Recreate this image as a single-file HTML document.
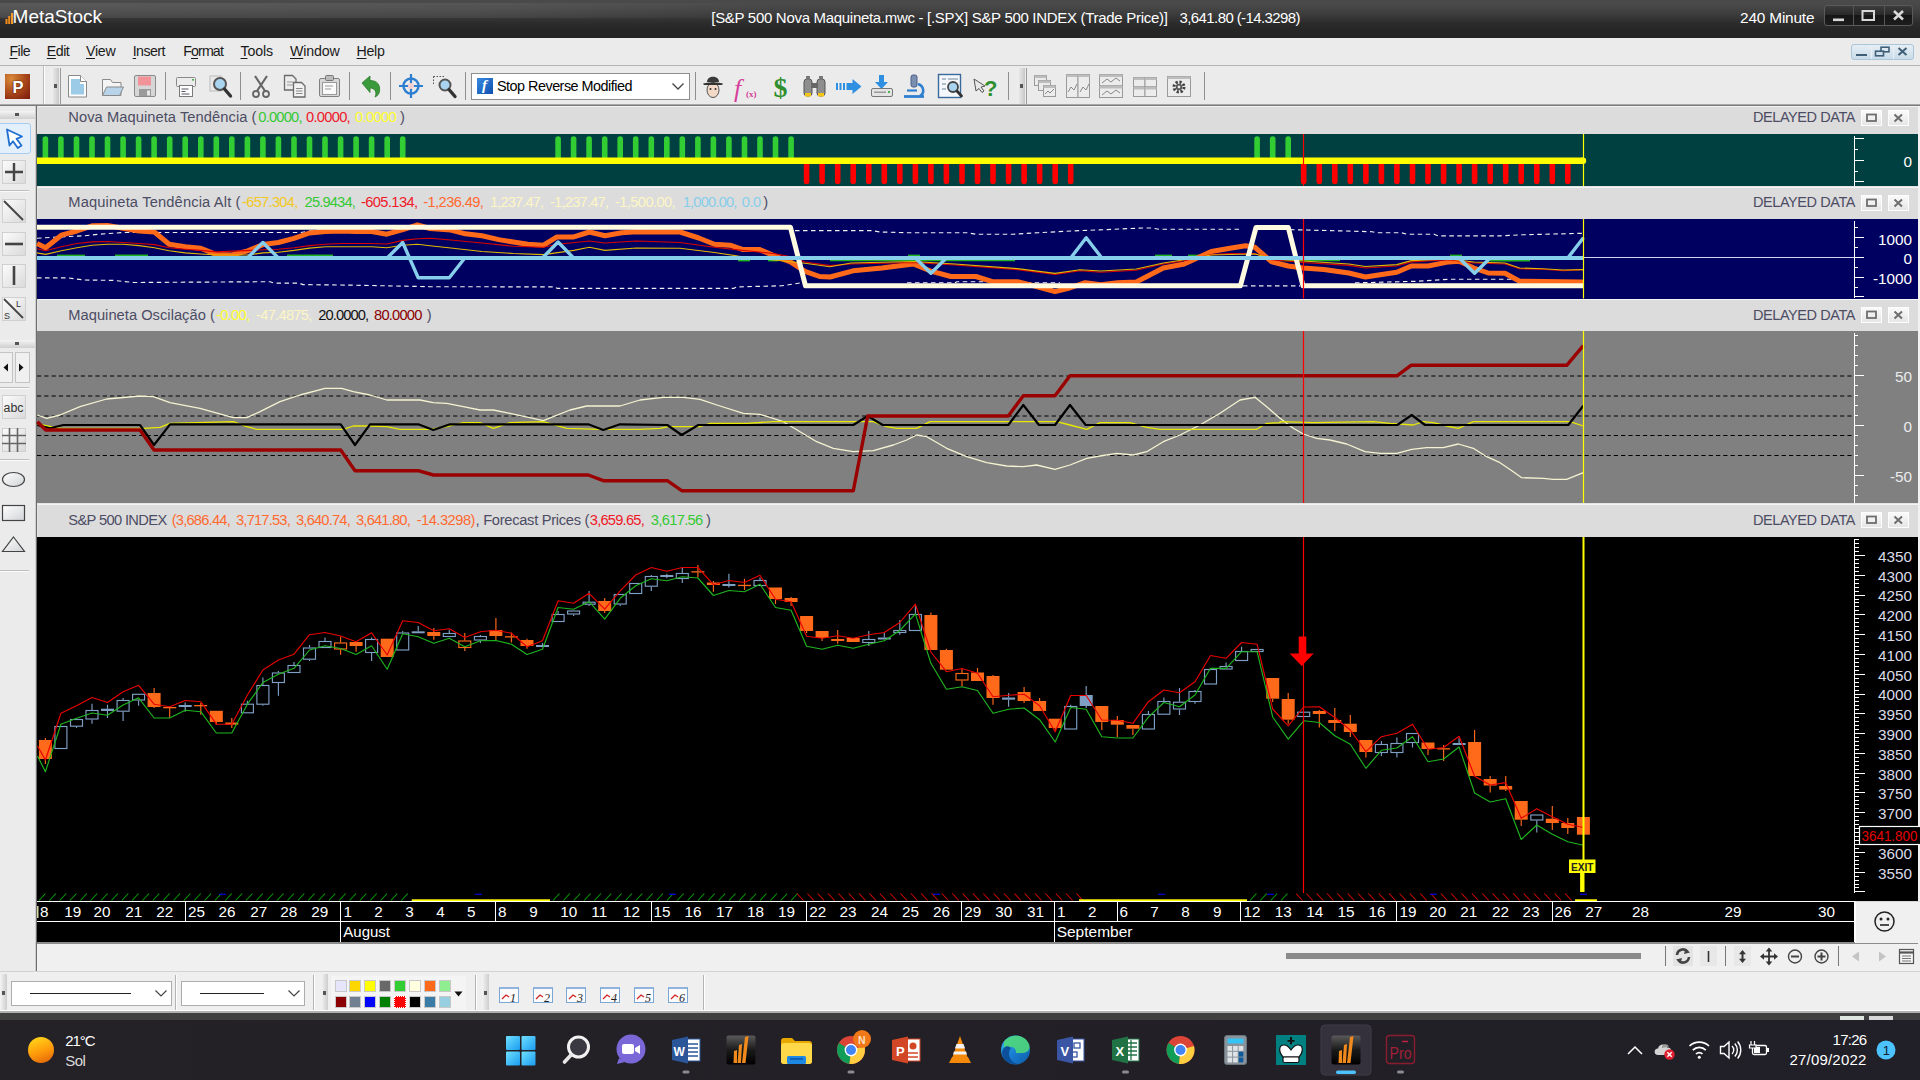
<!DOCTYPE html>
<html lang="en"><head><meta charset="utf-8"><title>MetaStock</title>
<style>
html,body{margin:0;padding:0;}
body{width:1920px;height:1080px;overflow:hidden;position:relative;background:#f0f0f0;font-family:"Liberation Sans",sans-serif;font-size:14px;color:#000;}
.a{position:absolute;}
.t{position:absolute;white-space:nowrap;line-height:1;}
#titlebar{left:0;top:0;width:1920px;height:38px;background:linear-gradient(90deg,rgba(255,255,255,0.09) 0,rgba(255,255,255,0.07) 25%,rgba(255,255,255,0) 42%) 0 3px/1920px 15px no-repeat,linear-gradient(180deg,#4a4a4a 0px,#494949 4px,#444 9px,#393939 16px,#2c2c2c 23px,#262626 30px,#242424 38px);}
#menubar{left:0;top:38px;width:1920px;height:27px;background:#ebebeb;}
#toolbar{left:0;top:65px;width:1920px;height:40px;background:#ebebeb;border-top:1px solid #b4b4b4;box-sizing:border-box;}
.menu{top:47px;font-size:14.6px;color:#1a1a1a;letter-spacing:-0.45px;}
.menu u{text-decoration:underline;text-underline-offset:2px;}
.vsep{position:absolute;width:1px;background:#8f8f8f;top:72px;height:28px;}
.hdr{position:absolute;left:38px;width:1880px;background:#dcdcdc;border-top:1px solid #f4f4f4;box-sizing:border-box;}
.hdr .t{top:5px;font-size:14.6px;color:#48485e;letter-spacing:-0.32px;}
.hbtn{position:absolute;top:3px;width:21px;height:16px;background:linear-gradient(#fafafa,#e6e6e6);border:1px solid #fdfdfd;box-sizing:border-box;}
.lbtn{position:absolute;left:2px;width:24px;height:24px;background:linear-gradient(135deg,#fbfbfb,#dadada);border:1px solid #d0d0d0;box-sizing:border-box;}
</style></head><body>
<div id="titlebar" class="a"></div><svg class="a" style="left:5px;top:12px" width="9" height="12" viewBox="0 0 9 12"><rect x="0.5" y="7" width="2" height="5" fill="#f08a1c"/><rect x="3.2" y="4" width="2" height="8" fill="#f08a1c"/><rect x="6" y="1" width="2.2" height="11" fill="#f59b2a"/></svg><div class="t" style="left:12.6px;top:7.1px;font-size:19px;letter-spacing:-0.040px;color:#fff;">MetaStock</div><div class="t" style="left:711.3px;top:9.8px;font-size:15px;letter-spacing:-0.301px;color:#fff;">[S&amp;P 500 Nova Maquineta.mwc - [.SPX] S&amp;P 500 INDEX (Trade Price)]</div><div class="t" style="left:1179.5px;top:9.8px;font-size:15px;letter-spacing:-0.593px;color:#fff;">3,641.80 (-14.3298)</div><div class="t" style="left:1740.0px;top:9.6px;font-size:15.4px;letter-spacing:-0.180px;color:#fff;">240 Minute</div><div class="a" style="left:1824px;top:5px;width:89px;height:21px;border-radius:3px;background:linear-gradient(#3c3c3c,#2a2a2a 45%,#161616 50%,#1d1d1d);border:1px solid #5a5a5a;box-sizing:border-box;"></div><div class="a" style="left:1853px;top:6px;width:1px;height:19px;background:#555"></div><div class="a" style="left:1884px;top:6px;width:1px;height:19px;background:#555"></div><svg class="a" style="left:1824px;top:5px" width="89" height="21" viewBox="0 0 89 21"><rect x="9" y="13.5" width="11" height="2.6" fill="#d8d8d8"/><rect x="38.5" y="6" width="11.5" height="9" fill="none" stroke="#d8d8d8" stroke-width="2"/><path d="M70 6 L79 14.5 M79 6 L70 14.5" stroke="#d8d8d8" stroke-width="2.6"/></svg><div id="menubar" class="a"></div><div class="t" style="left:9.5px;top:43.7px;font-size:14.2px;letter-spacing:-0.595px;color:#1a1a1a;text-underline-offset:2px;"><u>F</u>ile</div><div class="t" style="left:46.8px;top:43.7px;font-size:14.2px;letter-spacing:-0.492px;color:#1a1a1a;text-underline-offset:2px;"><u>E</u>dit</div><div class="t" style="left:86.0px;top:43.7px;font-size:14.2px;letter-spacing:-0.256px;color:#1a1a1a;text-underline-offset:2px;"><u>V</u>iew</div><div class="t" style="left:132.7px;top:43.7px;font-size:14.2px;letter-spacing:-0.536px;color:#1a1a1a;text-underline-offset:2px;"><u>I</u>nsert</div><div class="t" style="left:183.2px;top:43.7px;font-size:14.2px;letter-spacing:-0.862px;color:#1a1a1a;text-underline-offset:2px;">F<u>o</u>rmat</div><div class="t" style="left:240.5px;top:43.7px;font-size:14.2px;letter-spacing:-0.130px;color:#1a1a1a;text-underline-offset:2px;"><u>T</u>ools</div><div class="t" style="left:290.0px;top:43.7px;font-size:14.2px;letter-spacing:-0.168px;color:#1a1a1a;text-underline-offset:2px;"><u>W</u>indow</div><div class="t" style="left:356.6px;top:43.7px;font-size:14.2px;letter-spacing:-0.326px;color:#1a1a1a;text-underline-offset:2px;"><u>H</u>elp</div><div class="a" style="left:1851px;top:44px;width:63px;height:16px;border-radius:3px;background:linear-gradient(#e6eef5,#c9dbe8);border:1px solid #a9c6da;box-sizing:border-box;"></div><svg class="a" style="left:1851px;top:44px" width="63" height="16" viewBox="0 0 63 16"><rect x="5" y="10" width="11" height="2" fill="#3f5f78"/><rect x="30" y="3.2" width="8" height="4.6" fill="none" stroke="#3f5f78" stroke-width="1.6"/><rect x="24.5" y="7.2" width="8" height="4.6" fill="#cfe0ec" stroke="#3f5f78" stroke-width="1.6"/><path d="M47.5 4 L55.5 11 M55.5 4 L47.5 11" stroke="#3f5f78" stroke-width="2"/><path d="M20.5 1V15M42.5 1V15" stroke="#e8f0f6" stroke-width="1"/></svg><div id="toolbar" class="a"></div><div class="a" style="left:0;top:104px;width:1920px;height:1px;background:#a8a8a8"></div><div class="a" style="left:0;top:105px;width:1920px;height:1px;background:#7a7a7a"></div><div class="a" style="left:5px;top:74px;width:25px;height:25px;background:radial-gradient(circle at 25% 20%,#d98a3a,#b0501c 45%,#8c2a12 80%,#7a1c0c);"></div><div class="t" style="left:12.500px;top:79px;font-size:16.500px;font-weight:bold;color:#fff;text-shadow:0 0 2px #300">P</div><div class="a" style="left:43px;top:66px;width:1px;height:38px;background:#bdbdbd"></div><div class="a" style="left:44px;top:66px;width:1px;height:38px;background:#fff"></div><div class="a" style="left:51px;top:68px;width:8px;height:36px;background:linear-gradient(90deg,#f2f2f2,#c8c8c8)"></div><div class="a" style="left:54px;top:84px;width:3px;height:4px;background:#555"></div><div class="a" style="left:60px;top:68px;width:1px;height:36px;background:#9a9a9a"></div><div class="a" style="left:1017px;top:68px;width:8px;height:36px;background:linear-gradient(90deg,#f2f2f2,#c8c8c8)"></div><div class="a" style="left:1020px;top:84px;width:3px;height:4px;background:#555"></div><div class="a" style="left:1026px;top:68px;width:1px;height:36px;background:#9a9a9a"></div><div class="vsep" style="left:165px"></div><div class="vsep" style="left:240px"></div><div class="vsep" style="left:349px"></div><div class="vsep" style="left:390px"></div><div class="vsep" style="left:465px"></div><div class="vsep" style="left:695px"></div><div class="vsep" style="left:1008px"></div><div class="vsep" style="left:1204px"></div><svg class="a" style="left:0;top:0" width="1920" height="110" viewBox="0 0 1920 110"><path d="M68.5 75.5h12l6 6v15.5h-18z" fill="#fdfdfd" stroke="#8a8a8a"/><path d="M71 79h9v5h4v10.5h-13z" fill="#9ccbe8"/><path d="M80.5 75.5v6h6" fill="#fff" stroke="#8a8a8a"/><path d="M102.5 95.5v-16h8l2 3h8.5v13z" fill="#f4f4f4" stroke="#8a8a8a"/><path d="M102.5 95.5l4-8.5h17l-4 8.5z" fill="#b8d4ea" stroke="#8a8a8a"/><rect x="134.5" y="75.5" width="21" height="21" rx="1.5" fill="#d6d6d6" stroke="#8a8a8a"/><rect x="138" y="76.5" width="13" height="9" fill="#f2939a"/><rect x="139" y="89" width="12" height="7" fill="#9a9a9a"/><rect x="147" y="90.5" width="3" height="5" fill="#e6e6e6"/><rect x="176.5" y="77.5" width="19" height="9" rx="1" fill="#ececec" stroke="#8a8a8a"/><rect x="179.5" y="85.5" width="13" height="11" fill="#fff" stroke="#7a7a7a"/><path d="M181.5 89h7M181.5 91.5h4M181.5 94h8" stroke="#556" stroke-width="1"/><rect x="192" y="79" width="2" height="1.6" fill="#4caf50"/><rect x="210" y="76" width="11" height="15" fill="#e8e8e8" stroke="#bbb"/><circle cx="220" cy="84" r="6" fill="#a8d4f0" stroke="#555" stroke-width="2"/><path d="M224.5 89l6 7" stroke="#333" stroke-width="3.4" stroke-linecap="round"/><path d="M255 76l10 15M267 76l-10 15" stroke="#666" stroke-width="2.2" fill="none"/><circle cx="256" cy="94" r="3" fill="none" stroke="#666" stroke-width="1.8"/><circle cx="266" cy="94" r="3" fill="none" stroke="#666" stroke-width="1.8"/><path d="M284.5 75.500h8l3.500 3.500v11h-11.500z" fill="#ececec" stroke="#6a6a6a" stroke-width="1.300"/><path d="M287 82h6M287 85h6" stroke="#999"/><path d="M293.5 82.500h8l3.500 3.500v11h-11.500z" fill="#f2f2f2" stroke="#6a6a6a" stroke-width="1.300"/><path d="M296 88.500h6.500M296 91h6.500M296 93.500h6.500" stroke="#888"/><rect x="319.500" y="78.500" width="20" height="18" rx="1.500" fill="#d8d8d8" stroke="#808080"/><rect x="322.500" y="82.500" width="14" height="12" fill="#fafafa" stroke="#999"/><rect x="325.500" y="75.500" width="8" height="5" rx="1" fill="#bbb" stroke="#777"/><path d="M325 86h8M325 89h6" stroke="#999"/><path d="M362 83l8-7v4.500c7 0 10.500 4 9.500 11c-0.500 2.500-2 4.500-4.500 5.500c2.500-5-0.500-9-5-9v4.500z" fill="#3b9a3b" stroke="#2c7a2c" stroke-width="0.800"/><circle cx="411" cy="86" r="7.500" fill="none" stroke="#2f7fd0" stroke-width="2.400"/><path d="M411 74v24M399 86h24" stroke="#2f7fd0" stroke-width="2.200"/><circle cx="411" cy="86" r="3" fill="#f6d0d0"/><path d="M433.500 76.500h11M433.500 76.500v9" stroke="#555" stroke-dasharray="1.500 1.500" fill="none"/><circle cx="445" cy="85" r="5.500" fill="#a8d4f0" stroke="#555" stroke-width="2"/><path d="M449 89.500l6 7" stroke="#333" stroke-width="3.400" stroke-linecap="round"/><ellipse cx="713" cy="90" rx="6" ry="7.500" fill="#f3d9c8" stroke="#555"/><path d="M703 83.500c3-1.500 17-1.500 20 0l-1 1.500h-18z" fill="#333"/><path d="M707 82c0-7 12-7 12 0z" fill="#3a3a3a"/><circle cx="710.500" cy="89" r="1" fill="#333"/><circle cx="715.500" cy="89" r="1" fill="#333"/><text x="734" y="97" font-family="Liberation Serif,serif" font-style="italic" font-size="26" fill="#d6409a">f</text><text x="746" y="97" font-family="Liberation Serif,serif" font-size="9" font-weight="bold" fill="#d6409a">(x)</text><text x="773.500" y="96.500" font-family="Liberation Serif,serif" font-size="28" font-weight="bold" fill="#2f8f2f">$</text><rect x="804" y="79" width="8" height="17" rx="3" fill="#8e8e8e" stroke="#555"/><rect x="817" y="79" width="8" height="17" rx="3" fill="#8e8e8e" stroke="#555"/><rect x="811" y="83" width="7" height="5" fill="#666"/><rect x="805" y="93" width="6" height="3.500" fill="#f5c518"/><rect x="818" y="93" width="6" height="3.500" fill="#f5c518"/><rect x="806" y="76" width="4" height="4" fill="#777"/><rect x="819" y="76" width="4" height="4" fill="#777"/><path d="M836 83h2v7h-2zM839.500 83h2v7h-2zM843 83h2v7h-2zM846.500 83h6v-4l9 7.500l-9 7.500v-4h-6z" fill="#2f8fe0"/><path d="M879 75h5v7h4l-6.500 7l-6.500-7h4z" fill="#2f8fe0"/><rect x="871.500" y="88.500" width="21" height="8" rx="1.500" fill="#e4e4e4" stroke="#777"/><rect x="874" y="91.500" width="12" height="1.500" fill="#999"/><rect x="888" y="91" width="2" height="2" fill="#4caf50"/><rect x="911" y="75" width="6" height="12" rx="2" fill="#7d8fb0" stroke="#4a5f8a"/><path d="M918 84c6 2 7 9 2 12" fill="none" stroke="#2f7fd0" stroke-width="2.600"/><path d="M904 96.500h20" stroke="#2f7fd0" stroke-width="2.800"/><path d="M907 90.500h10" stroke="#2f7fd0" stroke-width="2.200"/><rect x="938.500" y="74.500" width="22" height="23" fill="#f4f8fc" stroke="#3a6a9a" stroke-width="1.400"/><path d="M942 79h4M948 79h10M942 84h4M942 89h4" stroke="#9ab" stroke-width="1.500"/><circle cx="953" cy="87" r="5" fill="#a8d4f0" stroke="#444" stroke-width="1.800"/><path d="M957 91l4.500 5" stroke="#333" stroke-width="2.800" stroke-linecap="round"/><path d="M974 79l2 12l3-2.500l3 4l2-1.500l-3-4l4-1z" fill="#e8e8e8" stroke="#555"/><text x="984" y="96" font-family="Liberation Sans,sans-serif" font-size="22" font-weight="bold" fill="#2f8f2f">?</text><rect x="1034.5" y="75.5" width="12" height="10" fill="#ececec" stroke="#9a9a9a"/><rect x="1034.5" y="75.5" width="12" height="2.500" fill="#bdbdbd"/><rect x="1038.5" y="80.5" width="12" height="10" fill="#ececec" stroke="#9a9a9a"/><rect x="1038.5" y="80.5" width="12" height="2.500" fill="#bdbdbd"/><rect x="1043.5" y="85.5" width="12" height="11" fill="#ececec" stroke="#9a9a9a"/><rect x="1043.5" y="85.5" width="12" height="2.500" fill="#bdbdbd"/><path d="M1045 94l3-3l2 2l4-4" stroke="#888" fill="none"/><rect x="1066.5" y="74.5" width="11.5" height="23" fill="#ececec" stroke="#9a9a9a"/><rect x="1066.5" y="74.5" width="11.5" height="2.500" fill="#bdbdbd"/><rect x="1078" y="74.5" width="11.5" height="23" fill="#ececec" stroke="#9a9a9a"/><rect x="1078" y="74.5" width="11.5" height="2.500" fill="#bdbdbd"/><path d="M1068 92l3-5l3 3l3-6M1080 92l3-5l3 3l3-6" stroke="#888" fill="none"/><rect x="1099.5" y="74.5" width="23" height="11.5" fill="#ececec" stroke="#9a9a9a"/><rect x="1099.5" y="74.5" width="23" height="2.500" fill="#bdbdbd"/><rect x="1099.5" y="86" width="23" height="11.5" fill="#ececec" stroke="#9a9a9a"/><rect x="1099.5" y="86" width="23" height="2.500" fill="#bdbdbd"/><path d="M1102 83l5-4l4 3l5-4l4 3M1102 95l5-4l4 3l5-4l4 3" stroke="#888" fill="none"/><rect x="1133.5" y="77.5" width="11.5" height="9.5" fill="#ececec" stroke="#9a9a9a"/><rect x="1133.5" y="77.5" width="11.5" height="2.500" fill="#bdbdbd"/><rect x="1145" y="77.5" width="11.5" height="9.5" fill="#ececec" stroke="#9a9a9a"/><rect x="1145" y="77.5" width="11.5" height="2.500" fill="#bdbdbd"/><rect x="1133.5" y="87" width="11.5" height="9.5" fill="#ececec" stroke="#9a9a9a"/><rect x="1133.5" y="87" width="11.5" height="2.500" fill="#bdbdbd"/><rect x="1145" y="87" width="11.5" height="9.5" fill="#ececec" stroke="#9a9a9a"/><rect x="1145" y="87" width="11.5" height="2.500" fill="#bdbdbd"/><rect x="1167.5" y="76.5" width="23" height="20" fill="#ececec" stroke="#9a9a9a"/><rect x="1167.5" y="76.5" width="23" height="2.500" fill="#bdbdbd"/><circle cx="1179" cy="87" r="5" fill="none" stroke="#444" stroke-width="3" stroke-dasharray="2.2 1.700"/><circle cx="1179" cy="87" r="3.200" fill="#555"/><circle cx="1179" cy="87" r="1.400" fill="#ececec"/></svg><div class="a" style="left:471px;top:73px;width:219px;height:27px;background:#fff;border:1px solid #8e8e8e;box-sizing:border-box;"></div><div class="a" style="left:477px;top:78px;width:16px;height:16px;background:linear-gradient(135deg,#3a8ae0,#0d4fb0);"></div><div class="t" style="left:482px;top:78px;font-family:'Liberation Serif',serif;font-style:italic;font-weight:bold;font-size:15px;color:#fff">f</div><div class="t" style="left:497.0px;top:78.8px;font-size:14.4px;letter-spacing:-0.508px;color:#000;">Stop Reverse Modified</div><svg class="a" style="left:670px;top:80px" width="16" height="12" viewBox="0 0 16 12"><path d="M2.500 3.500L8 9L13.500 3.500" fill="none" stroke="#444" stroke-width="1.300"/></svg><div class="a" style="left:0;top:106px;width:36px;height:865px;background:#ebebeb"></div><div class="a" style="left:35px;top:106px;width:1px;height:865px;background:#cfcfcf"></div><div class="a" style="left:36px;top:106px;width:1px;height:865px;background:#6e6e6e"></div><div class="a" style="left:0;top:111px;width:35px;height:8px;background:linear-gradient(#f4f4f4,#cfcfcf)"></div><div class="a" style="left:15px;top:113px;width:4px;height:3px;background:#555"></div><div class="a" style="left:0;top:340px;width:35px;height:8px;background:linear-gradient(#f4f4f4,#cfcfcf)"></div><div class="a" style="left:15px;top:342px;width:4px;height:3px;background:#555"></div><div class="a" style="left:-2px;top:123px;width:33px;height:31px;background:#e3effa;border:1px solid #a6cdf2;border-radius:3px;box-sizing:border-box"></div><svg class="a" style="left:4px;top:127px" width="24" height="24" viewBox="0 0 24 24"><path d="M3 2.500L18 9.500L12.500 11.800L17.500 18.500L13.800 21L9 14.200L5.500 18.500z" fill="#fff" stroke="#1f6fd0" stroke-width="1.800" stroke-linejoin="round"/></svg><div class="lbtn" style="top:159.5px"></div><svg class="a" style="left:1px;top:158.5px" width="26" height="26" viewBox="0 0 26 26"><path d="M13 4v18M4 13h18" stroke="#444" stroke-width="2.400"/></svg><div class="lbtn" style="top:199px"></div><svg class="a" style="left:1px;top:198px" width="26" height="26" viewBox="0 0 26 26"><path d="M3 3L22 22" stroke="#444" stroke-width="2"/></svg><div class="lbtn" style="top:231.5px"></div><svg class="a" style="left:1px;top:230.5px" width="26" height="26" viewBox="0 0 26 26"><path d="M4 13h18" stroke="#444" stroke-width="2.600"/></svg><div class="lbtn" style="top:264px"></div><svg class="a" style="left:1px;top:263px" width="26" height="26" viewBox="0 0 26 26"><path d="M13 3v19" stroke="#444" stroke-width="2.600"/></svg><div class="lbtn" style="top:296.5px"></div><svg class="a" style="left:1px;top:295.5px" width="26" height="26" viewBox="0 0 26 26"><path d="M3 3L22 22" stroke="#444" stroke-width="1.800"/><text x="15" y="11" font-size="9" font-family="Liberation Sans,sans-serif" fill="#333">L</text><text x="3" y="23" font-size="9" font-family="Liberation Sans,sans-serif" fill="#333">S</text></svg><div class="lbtn" style="top:395px"></div><svg class="a" style="left:1px;top:394px" width="26" height="26" viewBox="0 0 26 26"><text x="2.500" y="17.500" font-size="12.500" font-family="Liberation Sans,sans-serif" fill="#333" textLength="20" lengthAdjust="spacingAndGlyphs">abc</text></svg><div class="lbtn" style="top:428px"></div><svg class="a" style="left:1px;top:427px" width="26" height="26" viewBox="0 0 26 26"><path d="M8.500 1v24M16.500 1v24M1 8.500h24M1 16.500h24" stroke="#666" stroke-width="1.600"/></svg><div class="a" style="left:0;top:190px;width:29px;height:1px;background:#bdbdbd"></div><div class="a" style="left:0;top:191px;width:29px;height:1px;background:#fafafa"></div><div class="a" style="left:0;top:386.5px;width:29px;height:1px;background:#bdbdbd"></div><div class="a" style="left:0;top:387.5px;width:29px;height:1px;background:#fafafa"></div><div class="a" style="left:0;top:459px;width:29px;height:1px;background:#bdbdbd"></div><div class="a" style="left:0;top:460px;width:29px;height:1px;background:#fafafa"></div><div class="a" style="left:0;top:570px;width:29px;height:1px;background:#bdbdbd"></div><div class="a" style="left:0;top:571px;width:29px;height:1px;background:#fafafa"></div><div class="a" style="left:-1px;top:352px;width:14px;height:31px;border:1px solid #c4c4c4;box-sizing:border-box;background:#f0f0f0"></div><div class="a" style="left:15px;top:352px;width:15px;height:31px;border:1px solid #c4c4c4;box-sizing:border-box;background:#f0f0f0"></div><svg class="a" style="left:0;top:352px" width="30" height="31" viewBox="0 0 30 31"><path d="M8 11.500v8l-4.500-4zM19 11.500v8l4.500-4z" fill="#111"/></svg><svg class="a" style="left:0;top:465px" width="30" height="95" viewBox="0 0 30 95"><defs><linearGradient id="sg" x1="0" y1="0" x2="1" y2="1"><stop offset="0" stop-color="#fff"/><stop offset="1" stop-color="#d0d4d6"/></linearGradient></defs><ellipse cx="13.500" cy="14.500" rx="11" ry="7" fill="url(#sg)" stroke="#444" stroke-width="1.200"/><rect x="2.500" y="40.500" width="22" height="15" fill="url(#sg)" stroke="#444" stroke-width="1.200"/><path d="M13.500 72L24.500 86.500H2.500z" fill="url(#sg)" stroke="#444" stroke-width="1.200"/></svg><div class="a" style="left:37px;top:942px;width:1883px;height:2px;background:#8c8c8c"></div><div class="a" style="left:37px;top:944px;width:1883px;height:27px;background:#f0f0f0"></div><div class="a" style="left:1286px;top:953px;width:355px;height:6px;background:#8a8a8a"></div><div class="a" style="left:1665px;top:946px;width:1px;height:20px;background:#777"></div><div class="a" style="left:1725px;top:946px;width:1px;height:20px;background:#777"></div><div class="a" style="left:1838px;top:946px;width:1px;height:20px;background:#777"></div><svg class="a" style="left:1660px;top:944px" width="260" height="26" viewBox="1660 944 260 26">
<rect x="1673" y="946" width="20" height="20" fill="#e4e4e4"/><path d="M1677 955a6 6 0 0 1 10.500-3.500M1689 957a6 6 0 0 1-10.500 3.500" fill="none" stroke="#444" stroke-width="2.600"/><path d="M1685.500 948.500l4.500 4l-6 1.500zM1680.500 963.500l-4.500-4l6-1.500z" fill="#444"/>
<rect x="1700" y="946" width="17" height="20" fill="#e8e8e8"/><path d="M1708.500 951v11" stroke="#333" stroke-width="1.600"/>
<rect x="1734" y="946" width="17" height="20" fill="#e8e8e8"/><path d="M1742.500 952v9" stroke="#333" stroke-width="2"/><path d="M1742.500 950l3.500 4.200h-7zM1742.500 963l3.500-4.200h-7z" fill="#333"/>
<path d="M1769 950v13M1762 956.500h14" stroke="#333" stroke-width="1.800"/><path d="M1769 947.500l3.300 4h-6.600zM1769 965.500l3.300-4h-6.600zM1760 956.500l4-3.300v6.600zM1778 956.500l-4-3.300v6.600z" fill="#333"/>
<circle cx="1795" cy="956.500" r="6.500" fill="none" stroke="#444" stroke-width="1.400"/><path d="M1791 956.500h8" stroke="#444" stroke-width="2"/>
<circle cx="1821.500" cy="956.500" r="6.500" fill="none" stroke="#444" stroke-width="1.400"/><path d="M1817.500 956.500h8M1821.500 952.500v8" stroke="#444" stroke-width="2"/>
<path d="M1859 951.500v10l-7-5z" fill="#c4c4c4"/><path d="M1879 951.500v10l7-5z" fill="#c4c4c4"/>
<rect x="1899.500" y="949.500" width="14" height="14" fill="#f6f6f6" stroke="#555" stroke-width="1.200"/><path d="M1899.500 952.500h14" stroke="#555" stroke-width="2.200"/><path d="M1902 956h9M1902 958.500h9M1902 961h9" stroke="#777" stroke-width="1"/>
</svg><div class="a" style="left:0;top:971px;width:1920px;height:1px;background:#d2d2d2"></div><div class="a" style="left:0;top:972px;width:1920px;height:40px;background:#efefef"></div><div class="a" style="left:0;top:1010px;width:1920px;height:1px;background:#fff"></div><div class="a" style="left:0;top:1011px;width:1920px;height:2px;background:#b0b0b0"></div><div class="a" style="left:0px;top:974px;width:7px;height:36px;background:linear-gradient(90deg,#f4f4f4,#cdcdcd)"></div><div class="a" style="left:2px;top:991px;width:3px;height:4px;background:#555"></div><div class="a" style="left:321px;top:974px;width:7px;height:36px;background:linear-gradient(90deg,#f4f4f4,#cdcdcd)"></div><div class="a" style="left:323px;top:991px;width:3px;height:4px;background:#555"></div><div class="a" style="left:482px;top:974px;width:7px;height:36px;background:linear-gradient(90deg,#f4f4f4,#cdcdcd)"></div><div class="a" style="left:484px;top:991px;width:3px;height:4px;background:#555"></div><div class="a" style="left:175px;top:975px;width:1px;height:35px;background:#b4b4b4"></div><div class="a" style="left:176px;top:975px;width:1px;height:35px;background:#fff"></div><div class="a" style="left:313px;top:975px;width:1px;height:35px;background:#b4b4b4"></div><div class="a" style="left:314px;top:975px;width:1px;height:35px;background:#fff"></div><div class="a" style="left:475px;top:975px;width:1px;height:35px;background:#b4b4b4"></div><div class="a" style="left:476px;top:975px;width:1px;height:35px;background:#fff"></div><div class="a" style="left:703px;top:975px;width:1px;height:35px;background:#b4b4b4"></div><div class="a" style="left:704px;top:975px;width:1px;height:35px;background:#fff"></div><div class="a" style="left:11px;top:981px;width:161px;height:25px;background:#fff;border:1px solid #adadad;box-sizing:border-box"></div><div class="a" style="left:30px;top:993px;width:101px;height:1px;background:#222"></div><svg class="a" style="left:154px;top:988px" width="14" height="10" viewBox="0 0 14 10"><path d="M1.500 2.500L7 8L12.500 2.500" fill="none" stroke="#444" stroke-width="1.200"/></svg><div class="a" style="left:181px;top:981px;width:124px;height:25px;background:#fff;border:1px solid #adadad;box-sizing:border-box"></div><div class="a" style="left:200px;top:993px;width:64px;height:1px;background:#222"></div><svg class="a" style="left:287px;top:988px" width="14" height="10" viewBox="0 0 14 10"><path d="M1.500 2.500L7 8L12.500 2.500" fill="none" stroke="#444" stroke-width="1.200"/></svg><div class="a" style="left:331px;top:976px;width:135px;height:34px;background:#f4f4f4"></div><div class="a" style="left:334.5px;top:980px;width:12px;height:12px;background:#e6e6fa;border:1px solid #c8c8c8;box-sizing:border-box"></div><div class="a" style="left:349.4px;top:980px;width:12px;height:12px;background:#ffd700;border:1px solid #c8c8c8;box-sizing:border-box"></div><div class="a" style="left:364.3px;top:980px;width:12px;height:12px;background:#ffff00;border:1px solid #c8c8c8;box-sizing:border-box"></div><div class="a" style="left:379.2px;top:980px;width:12px;height:12px;background:#696969;border:1px solid #c8c8c8;box-sizing:border-box"></div><div class="a" style="left:394.1px;top:980px;width:12px;height:12px;background:#32cd32;border:1px solid #c8c8c8;box-sizing:border-box"></div><div class="a" style="left:409.0px;top:980px;width:12px;height:12px;background:#ffffe0;border:1px solid #c8c8c8;box-sizing:border-box"></div><div class="a" style="left:423.9px;top:980px;width:12px;height:12px;background:#ff6a1a;border:1px solid #c8c8c8;box-sizing:border-box"></div><div class="a" style="left:438.8px;top:980px;width:12px;height:12px;background:#90ee90;border:1px solid #c8c8c8;box-sizing:border-box"></div><div class="a" style="left:334.5px;top:995.5px;width:12px;height:12px;background:#8b0000;border:1px solid #c8c8c8;box-sizing:border-box"></div><div class="a" style="left:349.4px;top:995.5px;width:12px;height:12px;background:#708090;border:1px solid #c8c8c8;box-sizing:border-box"></div><div class="a" style="left:364.3px;top:995.5px;width:12px;height:12px;background:#0000ff;border:1px solid #c8c8c8;box-sizing:border-box"></div><div class="a" style="left:379.2px;top:995.5px;width:12px;height:12px;background:#008000;border:1px solid #c8c8c8;box-sizing:border-box"></div><div class="a" style="left:394.1px;top:995.5px;width:12px;height:12px;background:#ff0000;border:1px dotted #fff;box-sizing:border-box"></div><div class="a" style="left:409.0px;top:995.5px;width:12px;height:12px;background:#000000;border:1px solid #c8c8c8;box-sizing:border-box"></div><div class="a" style="left:423.9px;top:995.5px;width:12px;height:12px;background:#3a7ca5;border:1px solid #c8c8c8;box-sizing:border-box"></div><div class="a" style="left:438.8px;top:995.5px;width:12px;height:12px;background:#96cfe0;border:1px solid #c8c8c8;box-sizing:border-box"></div><svg class="a" style="left:454px;top:991px" width="9" height="6" viewBox="0 0 9 6"><path d="M0.500 0.500h8l-4 5z" fill="#111"/></svg><div class="a" style="left:499.0px;top:987px;width:20px;height:16px;background:#fbfbfb;border:1px solid #7aa7d6;border-top:2px solid #8fb4de;box-sizing:border-box"></div><svg class="a" style="left:499.0px;top:987px" width="24" height="18" viewBox="0 0 24 18"><path d="M3 12l4-4l3 2" stroke="#d02020" fill="none" stroke-width="1.200"/><text x="11" y="15" font-size="12" font-family="Liberation Serif,serif" font-style="italic" fill="#222">1</text></svg><div class="a" style="left:532.7px;top:987px;width:20px;height:16px;background:#fbfbfb;border:1px solid #7aa7d6;border-top:2px solid #8fb4de;box-sizing:border-box"></div><svg class="a" style="left:532.7px;top:987px" width="24" height="18" viewBox="0 0 24 18"><path d="M3 12l4-4l3 2" stroke="#d02020" fill="none" stroke-width="1.200"/><text x="11" y="15" font-size="12" font-family="Liberation Serif,serif" font-style="italic" fill="#222">2</text></svg><div class="a" style="left:566.4px;top:987px;width:20px;height:16px;background:#fbfbfb;border:1px solid #7aa7d6;border-top:2px solid #8fb4de;box-sizing:border-box"></div><svg class="a" style="left:566.4px;top:987px" width="24" height="18" viewBox="0 0 24 18"><path d="M3 12l4-4l3 2" stroke="#d02020" fill="none" stroke-width="1.200"/><text x="11" y="15" font-size="12" font-family="Liberation Serif,serif" font-style="italic" fill="#222">3</text></svg><div class="a" style="left:600.1px;top:987px;width:20px;height:16px;background:#fbfbfb;border:1px solid #7aa7d6;border-top:2px solid #8fb4de;box-sizing:border-box"></div><svg class="a" style="left:600.1px;top:987px" width="24" height="18" viewBox="0 0 24 18"><path d="M3 12l4-4l3 2" stroke="#d02020" fill="none" stroke-width="1.200"/><text x="11" y="15" font-size="12" font-family="Liberation Serif,serif" font-style="italic" fill="#222">4</text></svg><div class="a" style="left:633.8px;top:987px;width:20px;height:16px;background:#fbfbfb;border:1px solid #7aa7d6;border-top:2px solid #8fb4de;box-sizing:border-box"></div><svg class="a" style="left:633.8px;top:987px" width="24" height="18" viewBox="0 0 24 18"><path d="M3 12l4-4l3 2" stroke="#d02020" fill="none" stroke-width="1.200"/><text x="11" y="15" font-size="12" font-family="Liberation Serif,serif" font-style="italic" fill="#222">5</text></svg><div class="a" style="left:667.5px;top:987px;width:20px;height:16px;background:#fbfbfb;border:1px solid #7aa7d6;border-top:2px solid #8fb4de;box-sizing:border-box"></div><svg class="a" style="left:667.5px;top:987px" width="24" height="18" viewBox="0 0 24 18"><path d="M3 12l4-4l3 2" stroke="#d02020" fill="none" stroke-width="1.200"/><text x="11" y="15" font-size="12" font-family="Liberation Serif,serif" font-style="italic" fill="#222">6</text></svg><div class="a" style="left:0;top:1013px;width:1920px;height:7px;background:#404040"></div><div class="a" style="left:0;top:1020px;width:1920px;height:60px;background:linear-gradient(90deg,#242127,#222026 60%,#211f27)"></div><div class="a" style="left:1840px;top:1016px;width:24px;height:4px;background:#dfe6df"></div><div class="a" style="left:1869px;top:1016px;width:24px;height:4px;background:#d8d8d8"></div><div class="a" style="left:28px;top:1037px;width:26px;height:26px;border-radius:50%;background:linear-gradient(160deg,#ffd21a 10%,#ff9a0a 55%,#e0650a 95%)"></div><div class="t" style="left:65.3px;top:1033.1px;font-size:15px;letter-spacing:-1.079px;color:#fff;">21°C</div><div class="t" style="left:65.3px;top:1053.1px;font-size:15px;letter-spacing:-0.594px;color:#dcdcdc;">Sol</div><svg class="a" style="left:0;top:1020px" width="1920" height="60" viewBox="0 1020 1920 60"><defs><linearGradient id="wg" x1="0" y1="0" x2="1" y2="1"><stop offset="0" stop-color="#6fe0ff"/><stop offset="1" stop-color="#1a9cf0"/></linearGradient></defs><rect x="506" y="1036" width="14" height="14" rx="1" fill="url(#wg)"/><rect x="521.500" y="1036" width="14" height="14" rx="1" fill="url(#wg)"/><rect x="506" y="1051.500" width="14" height="14" rx="1" fill="url(#wg)"/><rect x="521.500" y="1051.500" width="14" height="14" rx="1" fill="url(#wg)"/><circle cx="578.500" cy="1047" r="10" fill="#3a3840" stroke="#f2f2f2" stroke-width="3"/><path d="M571 1055l-6.500 7" stroke="#e8e8e8" stroke-width="3.600" stroke-linecap="round"/><circle cx="631" cy="1049" r="14.500" fill="#7b68d8"/><path d="M619 1058l-2 6l8-2z" fill="#7b68d8"/><rect x="622" y="1044" width="12" height="10" rx="2" fill="#fff"/><path d="M635 1048l5-3v9l-5-3z" fill="#fff"/><rect x="683" y="1039" width="17" height="22" fill="#fff" stroke="#2b579a"/><path d="M687 1044h11M687 1048h11M687 1052h11M687 1056h11" stroke="#2b579a" stroke-width="1.600"/><path d="M672 1040l16-3.500v27l-16-3.500z" fill="#2b579a"/><text x="673.500" y="1055.500" font-size="12" font-weight="bold" font-family="Liberation Sans,sans-serif" fill="#fff">W</text><defs><linearGradient id="mg741" x1="0" y1="0" x2="0" y2="1"><stop offset="0" stop-color="#5a5a5a"/><stop offset="0.500" stop-color="#1a1a1a"/><stop offset="1" stop-color="#000"/></linearGradient></defs><rect x="726.5" y="1035.500" width="29" height="29" rx="2" fill="url(#mg741)"/><path d="M734 1051l3-1l0 13h-3.500zM739 1045l3-1l-1 19h-3.500zM745 1037l3.500-1l-3 27h-3.500z" fill="#f08a1c"/><path d="M781 1041c0-2 1-3 3-3h8l3 3h14c2 0 3 1 3 3v17c0 2-1 3-3 3h-25c-2 0-3-1-3-3z" fill="#e9a800"/><path d="M781 1046c0-2 1-3 3-3h25c2 0 3 1 3 3v15c0 2-1 3-3 3h-25c-2 0-3-1-3-3z" fill="#ffd94a"/><rect x="787" y="1056" width="19" height="8" rx="1.500" fill="#1e88e5"/><rect x="790" y="1058" width="13" height="1.800" fill="#0d5cb0"/><circle cx="851" cy="1050" r="14" fill="#db4437"/><path d="M851 1050L838.9 1043A14 14 0 0 0 849.5 1063.900z" fill="#0f9d58"/><path d="M851 1050L849.5 1063.900A14 14 0 0 0 864.5 1046z" fill="#ffcd40"/><circle cx="851" cy="1050" r="6.400" fill="#fff"/><circle cx="851" cy="1050" r="5" fill="#4285f4"/><circle cx="862" cy="1039" r="9" fill="#f07818"/><text x="858" y="1043.500" font-size="10.500" font-weight="bold" font-family="Liberation Sans,sans-serif" fill="#ffe0c0">N</text><rect x="903" y="1039" width="17" height="22" fill="#fff" stroke="#d24726"/><circle cx="913" cy="1046" r="3.500" fill="#d24726"/><path d="M906 1053h12M906 1057h12" stroke="#d24726" stroke-width="1.600"/><path d="M892 1040l16-3.500v27l-16-3.500z" fill="#d24726"/><text x="896" y="1055.500" font-size="13" font-weight="bold" font-family="Liberation Sans,sans-serif" fill="#fff">P</text><path d="M960 1036l7.500 21h-15z" fill="#f58a0a"/><path d="M956.500 1044h7l1.600 4.500h-10.200z" fill="#f2f2f2"/><path d="M954 1051.500h12l1 3h-14z" fill="#f2f2f2"/><path d="M949 1063l3-6h16l3 6z" fill="#f58a0a"/><defs><linearGradient id="eg" x1="0" y1="0" x2="1" y2="1"><stop offset="0" stop-color="#35c1f1"/><stop offset="0.500" stop-color="#1a7fd4"/><stop offset="1" stop-color="#0c59a4"/></linearGradient></defs><circle cx="1015.500" cy="1050" r="14.500" fill="url(#eg)"/><path d="M1004 1042c5-8 20-9 25 2c2 6-2 9-8 9h-5c0-4-2-6-5-6c-3 0-6 2-7 5z" fill="#4fd67a" opacity="0.900"/><path d="M1011 1048c-4 5-2 13 6 16c-9 1-15-5-15-12c1-5 5-8 9-4z" fill="#0c4f9a"/><rect x="1067" y="1039" width="17" height="22" fill="#fff" stroke="#3955a3"/><rect x="1074" y="1043" width="6" height="5" fill="none" stroke="#3955a3" stroke-width="1.300"/><rect x="1072" y="1052" width="5" height="5" fill="none" stroke="#3955a3" stroke-width="1.300"/><path d="M1057 1040l16-3.500v27l-16-3.500z" fill="#3955a3"/><text x="1060.500" y="1055.500" font-size="13" font-weight="bold" font-family="Liberation Sans,sans-serif" fill="#fff">V</text><rect x="1122" y="1039" width="17" height="22" fill="#fff" stroke="#217346"/><path d="M1126 1043h11M1126 1047h11M1126 1051h11M1126 1055h11M1131 1040v20" stroke="#217346" stroke-width="1.300"/><path d="M1112 1040l16-3.500v27l-16-3.500z" fill="#217346"/><text x="1115.500" y="1055.500" font-size="13" font-weight="bold" font-family="Liberation Sans,sans-serif" fill="#fff">X</text><circle cx="1180.5" cy="1050" r="14" fill="#db4437"/><path d="M1180.5 1050L1168.4 1043A14 14 0 0 0 1179.0 1063.900z" fill="#0f9d58"/><path d="M1180.5 1050L1179.0 1063.900A14 14 0 0 0 1194.0 1046z" fill="#ffcd40"/><circle cx="1180.5" cy="1050" r="6.400" fill="#fff"/><circle cx="1180.5" cy="1050" r="5" fill="#4285f4"/><rect x="1224.500" y="1035.500" width="22" height="29" rx="2.500" fill="#8a939c" stroke="#6b747c"/><rect x="1227.500" y="1038.500" width="16" height="5" fill="#35c3f3"/><rect x="1227.5" y="1046.0" width="4.600" height="4.800" fill="#dfe3e6"/><rect x="1233.1" y="1046.0" width="4.600" height="4.800" fill="#dfe3e6"/><rect x="1238.7" y="1046.0" width="4.600" height="4.800" fill="#dfe3e6"/><rect x="1227.5" y="1051.8" width="4.600" height="4.800" fill="#dfe3e6"/><rect x="1233.1" y="1051.8" width="4.600" height="4.800" fill="#dfe3e6"/><rect x="1238.7" y="1051.8" width="4.600" height="4.800" fill="#0f5a9c"/><rect x="1227.5" y="1057.6" width="4.600" height="4.800" fill="#dfe3e6"/><rect x="1233.1" y="1057.6" width="4.600" height="4.800" fill="#dfe3e6"/><rect x="1238.7" y="1057.6" width="4.600" height="4.800" fill="#0f5a9c"/><rect x="1276" y="1035" width="30" height="30" fill="#008080"/><path d="M1290 1037h2v3h2.500v1.800h-2.500v2.500h-2v-2.500h-2.500v-1.800h2.500z" fill="#111"/><path d="M1283 1057c-5-6-4-12 1-12c3 0 5 2 7 5c2-3 4-5 7-5c5 0 6 6 1 12z" fill="#fff" stroke="#111" stroke-width="1.200"/><rect x="1283" y="1057" width="16" height="5.500" rx="1.500" fill="#fff" stroke="#111" stroke-width="1.200"/><rect x="1321" y="1025" width="50" height="50" rx="4" fill="#34313d" stroke="#3f3c48"/><defs><linearGradient id="mg1346" x1="0" y1="0" x2="0" y2="1"><stop offset="0" stop-color="#5a5a5a"/><stop offset="0.500" stop-color="#1a1a1a"/><stop offset="1" stop-color="#000"/></linearGradient></defs><rect x="1331.5" y="1035.500" width="29" height="29" rx="2" fill="url(#mg1346)"/><path d="M1339 1051l3-1l0 13h-3.500zM1344 1045l3-1l-1 19h-3.500zM1350 1037l3.500-1l-3 27h-3.500z" fill="#f08a1c"/><rect x="1336" y="1070.500" width="20" height="3.500" rx="1.700" fill="#4cc2ff"/><rect x="1386.500" y="1035.500" width="28" height="28" rx="3" fill="none" stroke="#8a1c30" stroke-width="1.400"/><text x="1389.500" y="1059" font-size="16" font-family="Liberation Sans,sans-serif" fill="#a02038" textLength="22" lengthAdjust="spacingAndGlyphs">Pro</text><path d="M1402 1041.500h6" stroke="#c02040" stroke-width="1.500"/><rect x="682.5" y="1070.500" width="7" height="3" rx="1.500" fill="#8a8a90"/><rect x="847.5" y="1070.500" width="7" height="3" rx="1.500" fill="#8a8a90"/><rect x="1122.0" y="1070.500" width="7" height="3" rx="1.500" fill="#8a8a90"/><rect x="1397.0" y="1070.500" width="7" height="3" rx="1.500" fill="#8a8a90"/><path d="M1628 1054l7-7l7 7" fill="none" stroke="#fff" stroke-width="1.500"/><path d="M1658 1055c-4.500 0-4.500-6.500 0-6.500c1-5 8-5 9-1c4.500-1 5.500 4.500 2 7.500z" fill="#d4d4d4"/><path d="M1662 1048c-1-3.500 5-5.500 7-1.500" fill="#9a9a9a"/><circle cx="1669.500" cy="1054.500" r="5.200" fill="#e02030"/><path d="M1667.300 1052.300l4.400 4.400M1671.700 1052.300l-4.400 4.400" stroke="#fff" stroke-width="1.400"/><path d="M1689.500 1046a14 14 0 0 1 19.500 0M1692.800 1050.200a9 9 0 0 1 13 0M1696 1054a4.500 4.500 0 0 1 6.500 0" fill="none" stroke="#fff" stroke-width="1.700"/><circle cx="1699.300" cy="1057.300" r="1.500" fill="#fff"/><path d="M1720.500 1046.500h3.500l5-4.500v16l-5-4.500h-3.500z" fill="none" stroke="#fff" stroke-width="1.400"/><path d="M1732 1046a5.500 5.500 0 0 1 0 8M1734.800 1043.500a9.500 9.500 0 0 1 0 13M1737.600 1041.500a13 13 0 0 1 0 17" fill="none" stroke="#fff" stroke-width="1.400"/><rect x="1752.500" y="1045.500" width="14" height="9" rx="1.500" fill="none" stroke="#fff" stroke-width="1.300"/><rect x="1767" y="1048" width="2" height="4" fill="#fff"/><rect x="1754" y="1047" width="6" height="6" fill="#fff"/><path d="M1751 1041v4M1754.500 1041v4M1749.500 1045h6.500v3h-6.500z" stroke="#fff" stroke-width="1.200" fill="#222026"/><circle cx="1886" cy="1050" r="9.500" fill="#4cc2ff"/><text x="1882.800" y="1055" font-size="13" font-family="Liberation Sans,sans-serif" fill="#10202c">1</text></svg><div class="t" style="left:1832.5px;top:1032.3px;font-size:15px;letter-spacing:-0.708px;color:#fff;">17:26</div><div class="t" style="left:1789.5px;top:1052.3px;font-size:15px;letter-spacing:0.192px;color:#fff;">27/09/2022</div><div class="a" style="left:37px;top:106px;width:1881px;height:836px;background:#e4e4e4"></div><div class="a" style="left:1918px;top:106px;width:2px;height:838px;background:#f2f2f2"></div><div class="hdr" style="top:106px;height:28px"><div class="hbtn" style="left:1823px;top:3px"></div><div class="hbtn" style="left:1850px;top:3px"></div><svg class="a" style="left:1823px;top:3px" width="50" height="16" viewBox="0 0 50 16"><rect x="6" y="4.500" width="9" height="6.500" fill="none" stroke="#6e6e6e" stroke-width="1.800"/><path d="M33.500 4.500L41 11.500M41 4.500L33.500 11.500" stroke="#6e6e6e" stroke-width="2"/></svg></div><div class="t" style="left:68.3px;top:109.9px;font-size:14.7px;letter-spacing:0.059px;color:#4c4c64;">Nova Maquineta Tendência (</div><div class="t" style="left:258.3px;top:109.9px;font-size:14.7px;letter-spacing:-0.807px;color:#34c934;">0.0000,</div><div class="t" style="left:306.0px;top:109.9px;font-size:14.7px;letter-spacing:-0.721px;color:#f01828;">0.0000,</div><div class="t" style="left:355.0px;top:109.9px;font-size:14.7px;letter-spacing:-0.660px;color:#ffff30;">0.0000</div><div class="t" style="left:400.0px;top:109.9px;font-size:14.7px;letter-spacing:-0.596px;color:#4c4c64;">)</div><div class="t" style="left:1753.0px;top:110.0px;font-size:14.5px;letter-spacing:-0.431px;color:#4c4c64;">DELAYED DATA</div><div class="hdr" style="top:187px;height:32px"><div class="hbtn" style="left:1823px;top:7px"></div><div class="hbtn" style="left:1850px;top:7px"></div><svg class="a" style="left:1823px;top:7px" width="50" height="16" viewBox="0 0 50 16"><rect x="6" y="4.500" width="9" height="6.500" fill="none" stroke="#6e6e6e" stroke-width="1.800"/><path d="M33.500 4.500L41 11.500M41 4.500L33.500 11.500" stroke="#6e6e6e" stroke-width="2"/></svg></div><div class="t" style="left:68.3px;top:194.9px;font-size:14.7px;letter-spacing:0.144px;color:#4c4c64;">Maquineta Tendência Alt (</div><div class="t" style="left:242.0px;top:194.9px;font-size:14.7px;letter-spacing:-0.713px;color:#f2c81e;">-657.304,</div><div class="t" style="left:304.6px;top:194.9px;font-size:14.7px;letter-spacing:-0.853px;color:#34c934;">25.9434,</div><div class="t" style="left:361.0px;top:194.9px;font-size:14.7px;letter-spacing:-0.624px;color:#f01828;">-605.134,</div><div class="t" style="left:423.3px;top:194.9px;font-size:14.7px;letter-spacing:-0.620px;color:#ff6a30;">-1,236.49,</div><div class="t" style="left:490.0px;top:194.9px;font-size:14.7px;letter-spacing:-0.890px;color:#fdf6c4;">1,237.47,</div><div class="t" style="left:550.0px;top:194.9px;font-size:14.7px;letter-spacing:-0.790px;color:#fdf6c4;">-1,237.47,</div><div class="t" style="left:615.0px;top:194.9px;font-size:14.7px;letter-spacing:-0.620px;color:#fdf6c4;">-1,500.00,</div><div class="t" style="left:682.7px;top:194.9px;font-size:14.7px;letter-spacing:-0.812px;color:#87ceeb;">1,000.00,</div><div class="t" style="left:741.7px;top:194.9px;font-size:14.7px;letter-spacing:-0.478px;color:#87ceeb;">0.0</div><div class="t" style="left:763.3px;top:194.9px;font-size:14.7px;letter-spacing:-0.496px;color:#4c4c64;">)</div><div class="t" style="left:1753.0px;top:195.0px;font-size:14.5px;letter-spacing:-0.431px;color:#4c4c64;">DELAYED DATA</div><div class="hdr" style="top:299px;height:32px"><div class="hbtn" style="left:1823px;top:7px"></div><div class="hbtn" style="left:1850px;top:7px"></div><svg class="a" style="left:1823px;top:7px" width="50" height="16" viewBox="0 0 50 16"><rect x="6" y="4.500" width="9" height="6.500" fill="none" stroke="#6e6e6e" stroke-width="1.800"/><path d="M33.500 4.500L41 11.500M41 4.500L33.500 11.500" stroke="#6e6e6e" stroke-width="2"/></svg></div><div class="t" style="left:68.3px;top:307.6px;font-size:14.7px;letter-spacing:0.021px;color:#4c4c64;">Maquineta Oscilação (</div><div class="t" style="left:216.0px;top:307.6px;font-size:14.7px;letter-spacing:-0.715px;color:#ffff30;">-0.00,</div><div class="t" style="left:256.0px;top:307.6px;font-size:14.7px;letter-spacing:-0.713px;color:#fdf6c4;">-47.4875,</div><div class="t" style="left:318.3px;top:307.6px;font-size:14.7px;letter-spacing:-0.903px;color:#111;">20.0000,</div><div class="t" style="left:374.0px;top:307.6px;font-size:14.7px;letter-spacing:-0.777px;color:#8b0000;">80.0000</div><div class="t" style="left:426.7px;top:307.6px;font-size:14.7px;letter-spacing:-0.896px;color:#4c4c64;">)</div><div class="t" style="left:1753.0px;top:307.7px;font-size:14.5px;letter-spacing:-0.431px;color:#4c4c64;">DELAYED DATA</div><div class="hdr" style="top:504px;height:33px"><div class="hbtn" style="left:1823px;top:7px"></div><div class="hbtn" style="left:1850px;top:7px"></div><svg class="a" style="left:1823px;top:7px" width="50" height="16" viewBox="0 0 50 16"><rect x="6" y="4.500" width="9" height="6.500" fill="none" stroke="#6e6e6e" stroke-width="1.800"/><path d="M33.500 4.500L41 11.500M41 4.500L33.500 11.500" stroke="#6e6e6e" stroke-width="2"/></svg></div><div class="t" style="left:68.3px;top:512.6px;font-size:14.7px;letter-spacing:-0.644px;color:#4c4c64;">S&amp;P 500 INDEX</div><div class="t" style="left:171.7px;top:512.6px;font-size:14.7px;letter-spacing:-0.790px;color:#ff6a30;">(3,686.44,</div><div class="t" style="left:236.0px;top:512.6px;font-size:14.7px;letter-spacing:-0.812px;color:#ff6a30;">3,717.53,</div><div class="t" style="left:296.0px;top:512.6px;font-size:14.7px;letter-spacing:-0.812px;color:#ff6a30;">3,640.74,</div><div class="t" style="left:356.0px;top:512.6px;font-size:14.7px;letter-spacing:-0.812px;color:#ff6a30;">3,641.80,</div><div class="t" style="left:416.7px;top:512.6px;font-size:14.7px;letter-spacing:-0.514px;color:#ff6a30;">-14.3298)</div><div class="t" style="left:475.6px;top:512.6px;font-size:14.7px;letter-spacing:-0.293px;color:#4c4c64;">, Forecast Prices (</div><div class="t" style="left:589.8px;top:512.6px;font-size:14.7px;letter-spacing:-0.790px;color:#f01828;">3,659.65,</div><div class="t" style="left:650.7px;top:512.6px;font-size:14.7px;letter-spacing:-0.653px;color:#34c934;">3,617.56</div><div class="t" style="left:706.0px;top:512.6px;font-size:14.7px;letter-spacing:-0.196px;color:#4c4c64;">)</div><div class="t" style="left:1753.0px;top:512.7px;font-size:14.5px;letter-spacing:-0.431px;color:#4c4c64;">DELAYED DATA</div><svg class="a" style="left:0;top:0" width="1920" height="1080" viewBox="0 0 1920 1080"><g shape-rendering="crispEdges"><rect x="37" y="134" width="1881" height="52" fill="#004040"/><rect x="37" y="219" width="1881" height="79.500" fill="#000060"/><rect x="37" y="331" width="1881" height="172" fill="#808080"/><rect x="37" y="537" width="1881" height="405" fill="#000"/></g><path d="M45.4 139V158" stroke="#32cd32" stroke-width="5.600" stroke-linecap="round"/><path d="M60.9 139V158" stroke="#32cd32" stroke-width="5.600" stroke-linecap="round"/><path d="M76.5 139V158" stroke="#32cd32" stroke-width="5.600" stroke-linecap="round"/><path d="M92.0 139V158" stroke="#32cd32" stroke-width="5.600" stroke-linecap="round"/><path d="M107.5 139V158" stroke="#32cd32" stroke-width="5.600" stroke-linecap="round"/><path d="M123.1 139V158" stroke="#32cd32" stroke-width="5.600" stroke-linecap="round"/><path d="M138.6 139V158" stroke="#32cd32" stroke-width="5.600" stroke-linecap="round"/><path d="M154.1 139V158" stroke="#32cd32" stroke-width="5.600" stroke-linecap="round"/><path d="M169.7 139V158" stroke="#32cd32" stroke-width="5.600" stroke-linecap="round"/><path d="M185.2 139V158" stroke="#32cd32" stroke-width="5.600" stroke-linecap="round"/><path d="M200.8 139V158" stroke="#32cd32" stroke-width="5.600" stroke-linecap="round"/><path d="M216.3 139V158" stroke="#32cd32" stroke-width="5.600" stroke-linecap="round"/><path d="M231.8 139V158" stroke="#32cd32" stroke-width="5.600" stroke-linecap="round"/><path d="M247.4 139V158" stroke="#32cd32" stroke-width="5.600" stroke-linecap="round"/><path d="M262.9 139V158" stroke="#32cd32" stroke-width="5.600" stroke-linecap="round"/><path d="M278.4 139V158" stroke="#32cd32" stroke-width="5.600" stroke-linecap="round"/><path d="M294.0 139V158" stroke="#32cd32" stroke-width="5.600" stroke-linecap="round"/><path d="M309.5 139V158" stroke="#32cd32" stroke-width="5.600" stroke-linecap="round"/><path d="M325.0 139V158" stroke="#32cd32" stroke-width="5.600" stroke-linecap="round"/><path d="M340.6 139V158" stroke="#32cd32" stroke-width="5.600" stroke-linecap="round"/><path d="M356.1 139V158" stroke="#32cd32" stroke-width="5.600" stroke-linecap="round"/><path d="M371.6 139V158" stroke="#32cd32" stroke-width="5.600" stroke-linecap="round"/><path d="M387.2 139V158" stroke="#32cd32" stroke-width="5.600" stroke-linecap="round"/><path d="M402.7 139V158" stroke="#32cd32" stroke-width="5.600" stroke-linecap="round"/><path d="M558.1 139V158" stroke="#32cd32" stroke-width="5.600" stroke-linecap="round"/><path d="M573.6 139V158" stroke="#32cd32" stroke-width="5.600" stroke-linecap="round"/><path d="M589.1 139V158" stroke="#32cd32" stroke-width="5.600" stroke-linecap="round"/><path d="M604.7 139V158" stroke="#32cd32" stroke-width="5.600" stroke-linecap="round"/><path d="M620.2 139V158" stroke="#32cd32" stroke-width="5.600" stroke-linecap="round"/><path d="M635.7 139V158" stroke="#32cd32" stroke-width="5.600" stroke-linecap="round"/><path d="M651.3 139V158" stroke="#32cd32" stroke-width="5.600" stroke-linecap="round"/><path d="M666.8 139V158" stroke="#32cd32" stroke-width="5.600" stroke-linecap="round"/><path d="M682.3 139V158" stroke="#32cd32" stroke-width="5.600" stroke-linecap="round"/><path d="M697.9 139V158" stroke="#32cd32" stroke-width="5.600" stroke-linecap="round"/><path d="M713.4 139V158" stroke="#32cd32" stroke-width="5.600" stroke-linecap="round"/><path d="M728.9 139V158" stroke="#32cd32" stroke-width="5.600" stroke-linecap="round"/><path d="M744.5 139V158" stroke="#32cd32" stroke-width="5.600" stroke-linecap="round"/><path d="M760.0 139V158" stroke="#32cd32" stroke-width="5.600" stroke-linecap="round"/><path d="M775.5 139V158" stroke="#32cd32" stroke-width="5.600" stroke-linecap="round"/><path d="M791.1 139V158" stroke="#32cd32" stroke-width="5.600" stroke-linecap="round"/><path d="M1257.1 139V158" stroke="#32cd32" stroke-width="5.600" stroke-linecap="round"/><path d="M1272.7 139V158" stroke="#32cd32" stroke-width="5.600" stroke-linecap="round"/><path d="M1288.2 139V158" stroke="#32cd32" stroke-width="5.600" stroke-linecap="round"/><path d="M806.6 163V181.500" stroke="#ff0000" stroke-width="5.600" stroke-linecap="round"/><path d="M822.1 163V181.500" stroke="#ff0000" stroke-width="5.600" stroke-linecap="round"/><path d="M837.7 163V181.500" stroke="#ff0000" stroke-width="5.600" stroke-linecap="round"/><path d="M853.2 163V181.500" stroke="#ff0000" stroke-width="5.600" stroke-linecap="round"/><path d="M868.8 163V181.500" stroke="#ff0000" stroke-width="5.600" stroke-linecap="round"/><path d="M884.3 163V181.500" stroke="#ff0000" stroke-width="5.600" stroke-linecap="round"/><path d="M899.8 163V181.500" stroke="#ff0000" stroke-width="5.600" stroke-linecap="round"/><path d="M915.4 163V181.500" stroke="#ff0000" stroke-width="5.600" stroke-linecap="round"/><path d="M930.9 163V181.500" stroke="#ff0000" stroke-width="5.600" stroke-linecap="round"/><path d="M946.4 163V181.500" stroke="#ff0000" stroke-width="5.600" stroke-linecap="round"/><path d="M962.0 163V181.500" stroke="#ff0000" stroke-width="5.600" stroke-linecap="round"/><path d="M977.5 163V181.500" stroke="#ff0000" stroke-width="5.600" stroke-linecap="round"/><path d="M993.0 163V181.500" stroke="#ff0000" stroke-width="5.600" stroke-linecap="round"/><path d="M1008.6 163V181.500" stroke="#ff0000" stroke-width="5.600" stroke-linecap="round"/><path d="M1024.1 163V181.500" stroke="#ff0000" stroke-width="5.600" stroke-linecap="round"/><path d="M1039.6 163V181.500" stroke="#ff0000" stroke-width="5.600" stroke-linecap="round"/><path d="M1055.2 163V181.500" stroke="#ff0000" stroke-width="5.600" stroke-linecap="round"/><path d="M1070.7 163V181.500" stroke="#ff0000" stroke-width="5.600" stroke-linecap="round"/><path d="M1303.7 163V181.500" stroke="#ff0000" stroke-width="5.600" stroke-linecap="round"/><path d="M1319.3 163V181.500" stroke="#ff0000" stroke-width="5.600" stroke-linecap="round"/><path d="M1334.8 163V181.500" stroke="#ff0000" stroke-width="5.600" stroke-linecap="round"/><path d="M1350.3 163V181.500" stroke="#ff0000" stroke-width="5.600" stroke-linecap="round"/><path d="M1365.9 163V181.500" stroke="#ff0000" stroke-width="5.600" stroke-linecap="round"/><path d="M1381.4 163V181.500" stroke="#ff0000" stroke-width="5.600" stroke-linecap="round"/><path d="M1396.9 163V181.500" stroke="#ff0000" stroke-width="5.600" stroke-linecap="round"/><path d="M1412.5 163V181.500" stroke="#ff0000" stroke-width="5.600" stroke-linecap="round"/><path d="M1428.0 163V181.500" stroke="#ff0000" stroke-width="5.600" stroke-linecap="round"/><path d="M1443.6 163V181.500" stroke="#ff0000" stroke-width="5.600" stroke-linecap="round"/><path d="M1459.1 163V181.500" stroke="#ff0000" stroke-width="5.600" stroke-linecap="round"/><path d="M1474.6 163V181.500" stroke="#ff0000" stroke-width="5.600" stroke-linecap="round"/><path d="M1490.2 163V181.500" stroke="#ff0000" stroke-width="5.600" stroke-linecap="round"/><path d="M1505.7 163V181.500" stroke="#ff0000" stroke-width="5.600" stroke-linecap="round"/><path d="M1521.2 163V181.500" stroke="#ff0000" stroke-width="5.600" stroke-linecap="round"/><path d="M1536.8 163V181.500" stroke="#ff0000" stroke-width="5.600" stroke-linecap="round"/><path d="M1552.3 163V181.500" stroke="#ff0000" stroke-width="5.600" stroke-linecap="round"/><path d="M1567.8 163V181.500" stroke="#ff0000" stroke-width="5.600" stroke-linecap="round"/><path d="M37 160.700H1583" stroke="#ffff00" stroke-width="6.400"/><circle cx="1583" cy="160.700" r="3.200" fill="#ffff00"/><polyline points="37.0,238.3 52.0,237.3 84.0,235.8 99.0,234.2 124.0,232.5 301.0,232.5 309.0,231.0 322.0,229.6 330.0,229.0" fill="none" stroke="#f0f0f0" stroke-width="1.15" stroke-linejoin="round" stroke-dasharray="4.500 3.500"/><polyline points="795.0,230.6 872.0,230.6 880.0,232.0 907.0,232.7 967.0,232.7 976.0,234.2 1013.0,234.2 1038.0,232.7 1080.0,230.6 1107.0,229.6 1142.0,228.0 1151.0,228.0 1159.0,229.2 1240.0,229.2" fill="none" stroke="#f0f0f0" stroke-width="1.15" stroke-linejoin="round" stroke-dasharray="4.500 3.500"/><polyline points="1290.0,229.6 1372.0,231.7 1376.0,232.7 1401.0,232.7 1407.0,234.2 1434.0,234.2 1438.0,235.8 1501.0,235.8 1522.0,234.8 1583.0,233.3" fill="none" stroke="#f0f0f0" stroke-width="1.15" stroke-linejoin="round" stroke-dasharray="4.500 3.500"/><polyline points="37.0,277.9 68.0,277.9 84.0,280.0 113.0,280.4 134.0,282.5 270.0,281.7 274.0,283.1 299.0,283.1 303.0,284.6 355.0,285.2 430.0,286.7 555.0,286.9 557.0,288.3 734.0,288.3 737.0,286.9 782.0,285.8 800.0,283.0" fill="none" stroke="#f0f0f0" stroke-width="1.15" stroke-linejoin="round" stroke-dasharray="4.500 3.500"/><polyline points="907.0,282.7 955.0,282.7 957.0,281.7 992.0,281.7 1000.0,282.7 1060.0,282.7" fill="none" stroke="#f0f0f0" stroke-width="1.15" stroke-linejoin="round" stroke-dasharray="4.500 3.500"/><polyline points="1243.0,285.8 1300.0,285.8" fill="none" stroke="#f0f0f0" stroke-width="1.15" stroke-linejoin="round" stroke-dasharray="4.500 3.500"/><polyline points="1355.0,282.9 1388.0,282.0 1417.0,281.3 1449.0,279.2 1517.0,279.2 1520.0,280.0 1583.0,281.3" fill="none" stroke="#f0f0f0" stroke-width="1.15" stroke-linejoin="round" stroke-dasharray="4.500 3.500"/><path d="M57 255.3H85" stroke="#20b020" stroke-width="1.400"/><path d="M115 255.3H148" stroke="#20b020" stroke-width="1.400"/><path d="M287 255.3H333" stroke="#20b020" stroke-width="1.400"/><path d="M738 260.7H750" stroke="#20b020" stroke-width="1.400"/><path d="M768 260.7H778" stroke="#20b020" stroke-width="1.400"/><path d="M830 260.6H1015" stroke="#20b020" stroke-width="1.400"/><path d="M908 255.3H920" stroke="#20b020" stroke-width="1.400"/><path d="M1155 255.3H1172" stroke="#20b020" stroke-width="1.400"/><path d="M1188 255.3H1200" stroke="#20b020" stroke-width="1.400"/><path d="M1280 260.6H1340" stroke="#20b020" stroke-width="1.400"/><path d="M1450 255.3H1462" stroke="#20b020" stroke-width="1.400"/><path d="M1490 260.7H1530" stroke="#20b020" stroke-width="1.400"/><polyline points="37.0,243.5 45.6,247.7 61.3,235.2 76.9,231.0 92.0,225.8 107.5,225.4 123.0,228.3 139.0,231.0 154.4,232.0 169.2,244.2 185.2,246.7 200.8,248.3 216.5,254.6 232.0,255.0 247.7,250.8 263.0,244.6 278.3,242.5 294.0,238.3 309.6,233.0 325.4,231.5 340.4,231.0 356.0,231.5 371.7,231.5 386.7,234.2 402.9,229.6 417.5,224.8 430.0,228.5 450.8,230.0 465.4,233.8 482.0,235.8 498.8,239.6 513.3,242.0 528.0,244.2 543.5,245.2 557.0,236.9 573.8,236.9 589.4,232.0 605.0,235.8 621.7,232.7 636.3,231.7 680.0,232.0 698.8,238.0 714.4,244.2 730.0,245.2 742.5,249.4 759.2,249.4 773.8,255.6 790.4,261.9 805.0,271.3 819.6,276.5 830.0,277.0 853.0,270.8 882.0,268.0 913.3,264.0 930.0,270.8 950.8,276.5 975.8,276.5 992.5,281.7 1017.5,281.7 1038.3,287.0 1055.0,291.7 1069.6,288.0 1085.2,282.7 1100.8,284.8 1117.5,282.7 1136.3,282.0 1163.3,268.0 1184.2,264.0 1211.3,251.5 1230.0,248.3 1245.6,245.8 1255.0,247.3 1271.7,261.9 1288.3,266.0 1303.0,268.0 1323.8,269.6 1348.8,273.0 1365.4,277.0 1396.7,272.3 1411.3,266.0 1428.0,266.0 1448.8,261.9 1459.2,261.3 1473.8,268.0 1488.3,273.0 1505.0,273.3 1519.6,281.3 1583.0,282.0" fill="none" stroke="#ff6a1a" stroke-width="5" stroke-linejoin="round" /><polyline points="37.0,248.8 45.6,250.8 61.3,246.7 76.9,243.5 92.0,241.9 107.5,241.5 123.0,242.5 139.0,243.5 154.4,244.6 169.2,247.7 185.2,249.2 200.8,250.4 216.5,251.9 263.0,249.8 278.3,249.2 294.0,247.7 309.6,245.6 325.4,244.2 340.4,243.5 371.7,243.5 386.7,244.0 402.9,240.4 417.5,238.8 430.0,238.3 450.8,240.0 482.0,243.0 513.3,246.3 543.5,247.3 557.0,244.2 589.4,241.0 605.0,243.0 636.3,241.0 680.0,242.5 714.4,247.3 742.5,250.4 773.8,253.5 790.4,256.7 805.0,262.0 830.0,265.6 851.0,264.0 913.3,262.5 955.0,265.0 1017.5,269.6 1055.0,274.4 1080.0,270.8 1100.8,272.3 1136.3,270.2 1163.3,264.0 1184.2,260.8 1211.3,254.6 1230.0,253.5 1255.0,253.5 1271.7,259.8 1303.0,262.5 1348.8,265.4 1365.4,268.0 1396.7,266.0 1411.3,261.9 1448.8,259.8 1473.8,263.0 1505.0,264.0 1519.6,268.8 1542.5,269.2 1563.3,270.8 1583.0,269.6" fill="none" stroke="#d80000" stroke-width="1.15" stroke-linejoin="round" /><polyline points="37.0,252.9 45.6,254.4 61.3,250.8 76.9,247.7 92.0,245.2 107.5,244.2 123.0,244.2 139.0,245.6 154.4,247.7 169.2,250.8 185.2,252.9 200.8,254.0 216.5,255.0 247.7,255.0 263.0,252.9 278.3,252.3 294.0,250.4 309.6,248.1 325.4,246.7 371.7,246.7 386.7,247.7 402.9,245.2 417.5,244.2 430.0,245.8 450.8,248.0 482.0,251.5 513.3,253.5 543.5,254.6 573.8,250.4 589.4,247.3 605.0,250.4 636.3,248.0 680.0,248.3 714.4,252.5 742.5,256.7 805.0,263.3 830.0,266.7 851.0,263.0 913.3,261.5 955.0,264.0 1017.5,268.6 1055.0,273.4 1080.0,269.8 1100.8,271.0 1136.3,269.0 1163.3,263.0 1184.2,259.8 1211.3,255.0 1230.0,254.5 1255.0,254.0 1271.7,258.5 1303.0,261.0 1348.8,264.0 1365.4,266.5 1396.7,264.6 1411.3,260.6 1448.8,259.0 1473.8,262.0 1505.0,263.0 1519.6,268.0 1542.5,268.7 1563.3,270.0 1583.0,269.6" fill="none" stroke="#e0b800" stroke-width="1.1" stroke-linejoin="round" /><polyline points="37.0,227.2 790.4,227.2 805.5,285.8 1240.4,285.8 1256.0,227.5 1288.3,227.5 1303.0,285.8 1584.0,285.8" fill="none" stroke="#fffbe0" stroke-width="5" stroke-linejoin="round" stroke-linejoin="miter"/><path d="M37 258H1584" stroke="#87ceeb" stroke-width="4"/><polyline points="45.4,258.0 60.9,258.0 76.5,258.0 92.0,258.0 107.5,258.0 123.1,258.0 138.6,258.0 154.1,258.0 169.7,258.0 185.2,258.0 200.8,258.0 216.3,258.0 231.8,258.0 247.4,258.0 262.9,242.5 278.4,258.0 294.0,258.0 309.5,258.0 325.0,258.0 340.6,258.0 356.1,258.0 371.6,258.0 387.2,258.0 402.7,242.5 418.2,277.7 433.8,277.7 449.3,277.7 464.8,258.0 480.4,258.0 495.9,258.0 511.4,258.0 527.0,258.0 542.5,258.0 558.1,242.0 573.6,258.0 589.1,258.0 604.7,258.0 620.2,258.0 635.7,258.0 651.3,258.0 666.8,258.0 682.3,258.0 697.9,258.0 713.4,258.0 728.9,258.0 744.5,258.0 760.0,258.0 775.5,258.0 791.1,258.0 806.6,258.0 822.1,258.0 837.7,258.0 853.2,258.0 868.8,258.0 884.3,258.0 899.8,258.0 915.4,258.0 930.9,273.3 946.4,258.0 962.0,258.0 977.5,258.0 993.0,258.0 1008.6,258.0 1024.1,258.0 1039.6,258.0 1055.2,258.0 1070.7,258.0 1086.2,237.7 1101.8,258.0 1117.3,258.0 1132.9,258.0 1148.4,258.0 1163.9,258.0 1179.5,258.0 1195.0,258.0 1210.5,258.0 1226.1,258.0 1241.6,258.0 1257.1,258.0 1272.7,258.0 1288.2,258.0 1303.7,258.0 1319.3,258.0 1334.8,258.0 1350.3,258.0 1365.9,258.0 1381.4,258.0 1396.9,258.0 1412.5,258.0 1428.0,258.0 1443.6,258.0 1459.1,258.0 1474.6,273.3 1490.2,258.0 1505.7,258.0 1521.2,258.0 1536.8,258.0 1552.3,258.0 1567.8,258.0 1583.4,237.7" fill="none" stroke="#87ceeb" stroke-width="3.4" stroke-linejoin="round" stroke-linejoin="miter"/><path d="M1584 257.500H1854" stroke="#d4d4ee" stroke-width="1"/><path d="M37 376H1854" stroke="#000" stroke-width="1.150" stroke-dasharray="4.200 3.100"/><path d="M37 396H1854" stroke="#000" stroke-width="1.150" stroke-dasharray="4.200 3.100"/><path d="M37 416H1854" stroke="#000" stroke-width="1.150" stroke-dasharray="4.200 3.100"/><path d="M37 435.5H1854" stroke="#000" stroke-width="1.150" stroke-dasharray="4.200 3.100"/><path d="M37 455.5H1854" stroke="#000" stroke-width="1.150" stroke-dasharray="4.200 3.100"/><polyline points="37.3,415.0 46.7,418.3 60.0,415.0 80.0,406.7 106.7,399.0 140.0,396.0 153.3,396.7 170.0,402.7 200.0,408.3 233.3,417.7 246.7,417.7 260.0,411.7 280.0,401.7 300.0,395.0 325.0,388.3 341.7,388.3 353.3,391.7 370.0,395.0 386.7,400.0 420.0,400.0 433.3,402.7 446.7,403.3 463.3,406.7 480.0,410.0 493.3,410.0 510.0,413.3 543.3,420.7 570.0,410.0 586.7,406.0 620.0,406.0 640.0,400.0 663.3,397.3 683.3,397.3 700.0,399.3 720.0,406.0 743.3,413.3 760.0,414.3 783.3,421.7 800.0,431.7 816.7,441.7 833.3,448.3 853.3,451.7 873.3,450.7 893.3,445.0 906.7,440.0 916.7,435.0 926.7,436.7 946.7,448.3 966.7,456.7 986.7,462.7 1006.7,466.0 1023.3,466.7 1036.7,465.0 1055.0,469.3 1070.0,465.0 1086.7,458.3 1100.0,456.0 1116.7,453.3 1133.3,455.0 1146.7,451.7 1163.3,441.7 1180.0,435.0 1200.0,425.0 1220.0,413.3 1240.0,400.0 1255.0,397.3 1266.7,406.7 1280.0,418.3 1293.3,428.3 1303.3,434.0 1316.7,438.3 1330.0,440.0 1346.7,444.0 1365.0,451.7 1380.0,453.3 1396.7,453.3 1411.7,449.3 1426.7,447.7 1443.3,447.7 1458.3,444.0 1473.3,448.3 1486.7,456.7 1500.0,462.7 1513.3,471.7 1521.7,477.7 1543.3,478.3 1553.3,479.3 1566.7,479.3 1583.3,472.7" fill="none" stroke="#f4f2d0" stroke-width="1.3" stroke-linejoin="round" /><polyline points="37.3,424.0 60.0,428.3 143.3,428.3 160.0,427.3 170.0,423.3 233.3,421.7 246.7,426.7 256.7,429.3 343.3,429.3 353.3,426.0 370.0,426.0 386.7,426.7 400.0,429.3 430.0,429.3 446.7,426.7 463.3,422.7 480.0,422.7 493.3,428.3 510.0,422.7 543.3,421.7 566.7,428.3 600.0,429.3 640.0,429.3 660.0,428.3 668.3,426.7 700.0,426.7 710.0,423.3 746.7,423.3 773.3,421.7 873.3,421.7 886.7,426.7 896.7,428.3 916.7,428.3 930.0,421.7 1056.7,421.7 1070.0,425.0 1086.7,429.3 1100.0,422.7 1130.0,422.7 1146.7,427.3 1160.0,429.3 1256.7,429.3 1266.7,423.3 1280.0,422.7 1280.0,421.7 1313.3,422.7 1373.3,421.7 1390.0,423.3 1413.3,425.0 1423.3,421.7 1433.3,422.7 1446.7,426.0 1458.3,428.3 1473.3,421.7 1570.0,421.7 1583.3,426.0" fill="none" stroke="#e8e800" stroke-width="1.3" stroke-linejoin="round" /><polyline points="37.3,425.0 50.0,428.3 63.3,425.0 140.0,425.0 154.0,445.0 170.0,424.3 340.7,424.3 355.0,445.0 370.0,424.3 418.3,424.3 433.3,430.0 450.0,424.3 588.3,424.3 603.3,430.0 620.0,424.3 667.3,425.0 681.7,435.0 698.3,425.0 853.3,425.0 867.7,416.0 882.7,425.0 1008.3,425.0 1023.3,405.0 1039.0,425.0 1055.0,425.0 1070.0,405.0 1085.7,425.0 1397.3,425.0 1411.7,415.0 1425.0,425.0 1568.3,425.0 1583.3,405.7" fill="none" stroke="#000" stroke-width="2.2" stroke-linejoin="round" stroke-linejoin="miter"/><polyline points="37.3,421.7 45.7,430.0 140.0,430.0 154.0,450.0 340.7,450.0 355.0,470.7 418.3,470.7 433.3,475.0 588.3,475.0 603.3,480.7 667.3,480.7 681.7,490.7 853.3,490.7 867.7,416.0 1008.3,416.0 1023.3,395.7 1055.0,395.7 1070.0,375.7 1397.3,375.7 1411.0,365.3 1566.7,365.3 1583.3,345.7" fill="none" stroke="#9a0000" stroke-width="3.4" stroke-linejoin="round" stroke-linejoin="miter"/><path d="M45.4 738V740" stroke="#ff6a1a" stroke-width="1.150"/><path d="M45.4 759V764" stroke="#ff6a1a" stroke-width="1.150"/><rect x="38.9" y="740" width="13.0" height="19.0" fill="#ff6a1a"/><rect x="54.9" y="726.5" width="12.0" height="22.0" fill="none" stroke="#7f9fc4" stroke-width="1.150"/><path d="M76.5 726.7V728" stroke="#7f9fc4" stroke-width="1.150"/><rect x="70.5" y="719.5" width="12.0" height="6.7" fill="none" stroke="#7f9fc4" stroke-width="1.150"/><path d="M92.0 703.7V710" stroke="#7f9fc4" stroke-width="1.150"/><path d="M92.0 719.5V723.7" stroke="#7f9fc4" stroke-width="1.150"/><rect x="86.0" y="710.5" width="12.0" height="8.5" fill="none" stroke="#7f9fc4" stroke-width="1.150"/><path d="M107.5 704.7V708.7" stroke="#7f9fc4" stroke-width="1.150"/><path d="M107.5 711V718" stroke="#7f9fc4" stroke-width="1.150"/><rect x="101.0" y="708.7" width="13.0" height="2.3" fill="#7f9fc4"/><path d="M123.1 698V700" stroke="#7f9fc4" stroke-width="1.150"/><path d="M123.1 711.7V721" stroke="#7f9fc4" stroke-width="1.150"/><rect x="117.1" y="700.5" width="12.0" height="10.7" fill="none" stroke="#7f9fc4" stroke-width="1.150"/><path d="M138.6 700.5V705.8" stroke="#7f9fc4" stroke-width="1.150"/><rect x="132.6" y="694.3" width="12.0" height="5.7" fill="none" stroke="#7f9fc4" stroke-width="1.150"/><path d="M154.1 688V693" stroke="#ff6a1a" stroke-width="1.150"/><path d="M154.1 707V708" stroke="#ff6a1a" stroke-width="1.150"/><rect x="147.6" y="693" width="13.0" height="14.0" fill="#ff6a1a"/><path d="M169.7 708V717.5" stroke="#ff6a1a" stroke-width="1.150"/><rect x="163.2" y="707" width="13.0" height="1.300" fill="#ff6a1a"/><path d="M185.2 702.5V705" stroke="#7f9fc4" stroke-width="1.150"/><path d="M185.2 707V711.7" stroke="#7f9fc4" stroke-width="1.150"/><rect x="178.7" y="705" width="13.0" height="2.0" fill="#7f9fc4"/><path d="M200.8 703V705" stroke="#ff6a1a" stroke-width="1.150"/><path d="M200.8 706V714.7" stroke="#ff6a1a" stroke-width="1.150"/><rect x="194.2" y="705" width="13.0" height="1.300" fill="#ff6a1a"/><path d="M216.3 722V725" stroke="#ff6a1a" stroke-width="1.150"/><rect x="209.8" y="710.8" width="13.0" height="11.2" fill="#ff6a1a"/><path d="M231.8 718V722.5" stroke="#ff6a1a" stroke-width="1.150"/><path d="M231.8 724.7V728" stroke="#ff6a1a" stroke-width="1.150"/><rect x="225.3" y="722.5" width="13.0" height="2.2" fill="#ff6a1a"/><path d="M247.4 700.8V703.7" stroke="#7f9fc4" stroke-width="1.150"/><rect x="241.4" y="704.2" width="12.0" height="8.6" fill="none" stroke="#7f9fc4" stroke-width="1.150"/><path d="M262.9 677.5V685" stroke="#7f9fc4" stroke-width="1.150"/><path d="M262.9 704.7V705.8" stroke="#7f9fc4" stroke-width="1.150"/><rect x="256.9" y="685.5" width="12.0" height="18.7" fill="none" stroke="#7f9fc4" stroke-width="1.150"/><path d="M278.4 671V672.5" stroke="#7f9fc4" stroke-width="1.150"/><path d="M278.4 683V695.8" stroke="#7f9fc4" stroke-width="1.150"/><rect x="272.4" y="673.0" width="12.0" height="9.5" fill="none" stroke="#7f9fc4" stroke-width="1.150"/><path d="M294.0 662V665" stroke="#7f9fc4" stroke-width="1.150"/><rect x="288.0" y="665.5" width="12.0" height="7.0" fill="none" stroke="#7f9fc4" stroke-width="1.150"/><path d="M309.5 645V647.5" stroke="#7f9fc4" stroke-width="1.150"/><path d="M309.5 659.7V661" stroke="#7f9fc4" stroke-width="1.150"/><rect x="303.5" y="648.0" width="12.0" height="11.2" fill="none" stroke="#7f9fc4" stroke-width="1.150"/><path d="M325.0 637.5V641" stroke="#7f9fc4" stroke-width="1.150"/><rect x="319.0" y="641.5" width="12.0" height="6.0" fill="none" stroke="#7f9fc4" stroke-width="1.150"/><path d="M340.6 636.7V642.5" stroke="#ff6a1a" stroke-width="1.150"/><path d="M340.6 649.5V654.7" stroke="#ff6a1a" stroke-width="1.150"/><rect x="334.6" y="643.0" width="12.0" height="6.0" fill="none" stroke="#ff6a1a" stroke-width="1.150"/><path d="M356.1 641V642" stroke="#ff6a1a" stroke-width="1.150"/><path d="M356.1 646V651.7" stroke="#ff6a1a" stroke-width="1.150"/><rect x="349.6" y="642" width="13.0" height="4.0" fill="#ff6a1a"/><path d="M371.6 637.5V639" stroke="#7f9fc4" stroke-width="1.150"/><path d="M371.6 653V661" stroke="#7f9fc4" stroke-width="1.150"/><rect x="365.6" y="639.5" width="12.0" height="13.0" fill="none" stroke="#7f9fc4" stroke-width="1.150"/><rect x="380.7" y="638.7" width="13.0" height="18.3" fill="#ff6a1a"/><path d="M402.7 631V632.5" stroke="#7f9fc4" stroke-width="1.150"/><rect x="396.7" y="633.0" width="12.0" height="17.0" fill="none" stroke="#7f9fc4" stroke-width="1.150"/><path d="M418.2 626V631.3" stroke="#7f9fc4" stroke-width="1.150"/><rect x="411.7" y="631.3" width="13.0" height="2.0" fill="#7f9fc4"/><path d="M433.8 628V632" stroke="#ff6a1a" stroke-width="1.150"/><path d="M433.8 636V639.7" stroke="#ff6a1a" stroke-width="1.150"/><rect x="427.3" y="632" width="13.0" height="4.0" fill="#ff6a1a"/><path d="M449.3 630V633" stroke="#7f9fc4" stroke-width="1.150"/><rect x="443.3" y="633.5" width="12.0" height="3.0" fill="none" stroke="#7f9fc4" stroke-width="1.150"/><path d="M464.8 633V640.5" stroke="#ff6a1a" stroke-width="1.150"/><path d="M464.8 648V651" stroke="#ff6a1a" stroke-width="1.150"/><rect x="458.8" y="641.0" width="12.0" height="6.5" fill="none" stroke="#ff6a1a" stroke-width="1.150"/><path d="M480.4 635V636" stroke="#7f9fc4" stroke-width="1.150"/><path d="M480.4 640.5V643" stroke="#7f9fc4" stroke-width="1.150"/><rect x="474.4" y="636.5" width="12.0" height="3.5" fill="none" stroke="#7f9fc4" stroke-width="1.150"/><path d="M495.9 618V630" stroke="#ff6a1a" stroke-width="1.150"/><path d="M495.9 636V640" stroke="#ff6a1a" stroke-width="1.150"/><rect x="489.4" y="630" width="13.0" height="6.0" fill="#ff6a1a"/><path d="M511.4 632.5V636.2" stroke="#ff6a1a" stroke-width="1.150"/><path d="M511.4 637.2V642.5" stroke="#ff6a1a" stroke-width="1.150"/><rect x="504.9" y="636.2" width="13.0" height="1.300" fill="#ff6a1a"/><path d="M527.0 638.7V640" stroke="#ff6a1a" stroke-width="1.150"/><path d="M527.0 646V648.7" stroke="#ff6a1a" stroke-width="1.150"/><rect x="520.5" y="640" width="13.0" height="6.0" fill="#ff6a1a"/><path d="M542.5 643V645" stroke="#7f9fc4" stroke-width="1.150"/><rect x="536.0" y="645" width="13.0" height="2.0" fill="#7f9fc4"/><path d="M558.1 611V614" stroke="#7f9fc4" stroke-width="1.150"/><rect x="552.1" y="614.5" width="12.0" height="7.0" fill="none" stroke="#7f9fc4" stroke-width="1.150"/><path d="M573.6 614.5V616" stroke="#7f9fc4" stroke-width="1.150"/><rect x="567.6" y="611.0" width="12.0" height="3.0" fill="none" stroke="#7f9fc4" stroke-width="1.150"/><path d="M589.1 591V601.7" stroke="#7f9fc4" stroke-width="1.150"/><path d="M589.1 604.7V606" stroke="#7f9fc4" stroke-width="1.150"/><rect x="583.1" y="602.2" width="12.0" height="2.0" fill="none" stroke="#7f9fc4" stroke-width="1.150"/><path d="M604.7 598V601" stroke="#ff6a1a" stroke-width="1.150"/><path d="M604.7 611V613" stroke="#ff6a1a" stroke-width="1.150"/><rect x="598.2" y="601" width="13.0" height="10.0" fill="#ff6a1a"/><path d="M620.2 604.5V606" stroke="#7f9fc4" stroke-width="1.150"/><rect x="614.2" y="594.5" width="12.0" height="9.5" fill="none" stroke="#7f9fc4" stroke-width="1.150"/><rect x="629.7" y="583.5" width="12.0" height="10.0" fill="none" stroke="#7f9fc4" stroke-width="1.150"/><path d="M651.3 575V576" stroke="#7f9fc4" stroke-width="1.150"/><path d="M651.3 586.7V591" stroke="#7f9fc4" stroke-width="1.150"/><rect x="645.3" y="576.5" width="12.0" height="9.7" fill="none" stroke="#7f9fc4" stroke-width="1.150"/><path d="M666.8 573.7V575" stroke="#7f9fc4" stroke-width="1.150"/><path d="M666.8 577V578.3" stroke="#7f9fc4" stroke-width="1.150"/><rect x="660.3" y="575" width="13.0" height="2.0" fill="#7f9fc4"/><path d="M682.3 568V573" stroke="#7f9fc4" stroke-width="1.150"/><path d="M682.3 579V583" stroke="#7f9fc4" stroke-width="1.150"/><rect x="676.3" y="573.5" width="12.0" height="5.0" fill="none" stroke="#7f9fc4" stroke-width="1.150"/><path d="M697.9 565V571.2" stroke="#ff6a1a" stroke-width="1.150"/><path d="M697.9 572.2V577.5" stroke="#ff6a1a" stroke-width="1.150"/><rect x="691.4" y="571.2" width="13.0" height="1.300" fill="#ff6a1a"/><path d="M713.4 581V582.5" stroke="#ff6a1a" stroke-width="1.150"/><path d="M713.4 585V591.7" stroke="#ff6a1a" stroke-width="1.150"/><rect x="706.9" y="582.5" width="13.0" height="2.5" fill="#ff6a1a"/><path d="M728.9 573.7V584" stroke="#7f9fc4" stroke-width="1.150"/><path d="M728.9 586V587.5" stroke="#7f9fc4" stroke-width="1.150"/><rect x="722.4" y="584" width="13.0" height="2.0" fill="#7f9fc4"/><path d="M744.5 578.7V584.8" stroke="#ff6a1a" stroke-width="1.150"/><path d="M744.5 585.8V590" stroke="#ff6a1a" stroke-width="1.150"/><rect x="738.0" y="584.8" width="13.0" height="1.300" fill="#ff6a1a"/><path d="M760.0 577.5V580" stroke="#7f9fc4" stroke-width="1.150"/><rect x="754.0" y="580.5" width="12.0" height="5.0" fill="none" stroke="#7f9fc4" stroke-width="1.150"/><path d="M775.5 599V604" stroke="#ff6a1a" stroke-width="1.150"/><rect x="769.0" y="587.5" width="13.0" height="11.5" fill="#ff6a1a"/><path d="M791.1 597V598" stroke="#ff6a1a" stroke-width="1.150"/><path d="M791.1 602V606" stroke="#ff6a1a" stroke-width="1.150"/><rect x="784.6" y="598" width="13.0" height="4.0" fill="#ff6a1a"/><path d="M806.6 631V633" stroke="#ff6a1a" stroke-width="1.150"/><rect x="800.1" y="616" width="13.0" height="15.0" fill="#ff6a1a"/><path d="M822.1 638V641" stroke="#ff6a1a" stroke-width="1.150"/><rect x="815.6" y="631" width="13.0" height="7.0" fill="#ff6a1a"/><path d="M837.7 630V639" stroke="#ff6a1a" stroke-width="1.150"/><path d="M837.7 641V643.7" stroke="#ff6a1a" stroke-width="1.150"/><rect x="831.2" y="639" width="13.0" height="2.0" fill="#ff6a1a"/><rect x="846.7" y="638" width="13.0" height="4.0" fill="#ff6a1a"/><path d="M868.8 631V639" stroke="#7f9fc4" stroke-width="1.150"/><path d="M868.8 643V646" stroke="#7f9fc4" stroke-width="1.150"/><rect x="862.8" y="639.5" width="12.0" height="3.0" fill="none" stroke="#7f9fc4" stroke-width="1.150"/><path d="M884.3 632.5V637.5" stroke="#7f9fc4" stroke-width="1.150"/><rect x="877.8" y="637.5" width="13.0" height="2.0" fill="#7f9fc4"/><path d="M899.8 620V630" stroke="#7f9fc4" stroke-width="1.150"/><path d="M899.8 633V634.7" stroke="#7f9fc4" stroke-width="1.150"/><rect x="893.8" y="630.5" width="12.0" height="2.0" fill="none" stroke="#7f9fc4" stroke-width="1.150"/><path d="M915.4 604V614" stroke="#7f9fc4" stroke-width="1.150"/><rect x="909.4" y="614.5" width="12.0" height="16.0" fill="none" stroke="#7f9fc4" stroke-width="1.150"/><path d="M930.9 612.5V615" stroke="#ff6a1a" stroke-width="1.150"/><rect x="924.4" y="615" width="13.0" height="35.0" fill="#ff6a1a"/><path d="M946.4 648.7V650" stroke="#ff6a1a" stroke-width="1.150"/><rect x="939.9" y="650" width="13.0" height="19.7" fill="#ff6a1a"/><path d="M962.0 669V673" stroke="#ff6a1a" stroke-width="1.150"/><path d="M962.0 680.5V686" stroke="#ff6a1a" stroke-width="1.150"/><rect x="956.0" y="673.5" width="12.0" height="6.5" fill="none" stroke="#ff6a1a" stroke-width="1.150"/><path d="M977.5 668V672.5" stroke="#ff6a1a" stroke-width="1.150"/><rect x="971.0" y="672.5" width="13.0" height="8.5" fill="#ff6a1a"/><path d="M993.0 675V676" stroke="#ff6a1a" stroke-width="1.150"/><path d="M993.0 698V704.7" stroke="#ff6a1a" stroke-width="1.150"/><rect x="986.5" y="676" width="13.0" height="22.0" fill="#ff6a1a"/><path d="M1008.6 693V697.5" stroke="#7f9fc4" stroke-width="1.150"/><path d="M1008.6 699.7V706.7" stroke="#7f9fc4" stroke-width="1.150"/><rect x="1002.1" y="697.5" width="13.0" height="2.2" fill="#7f9fc4"/><path d="M1024.1 687V692" stroke="#ff6a1a" stroke-width="1.150"/><path d="M1024.1 701V703" stroke="#ff6a1a" stroke-width="1.150"/><rect x="1017.6" y="692" width="13.0" height="9.0" fill="#ff6a1a"/><path d="M1039.6 698V701" stroke="#ff6a1a" stroke-width="1.150"/><rect x="1033.1" y="701" width="13.0" height="10.0" fill="#ff6a1a"/><path d="M1055.2 728V731.7" stroke="#ff6a1a" stroke-width="1.150"/><rect x="1048.7" y="718.7" width="13.0" height="9.3" fill="#ff6a1a"/><path d="M1070.7 704.7V706" stroke="#7f9fc4" stroke-width="1.150"/><rect x="1064.7" y="706.5" width="12.0" height="22.5" fill="none" stroke="#7f9fc4" stroke-width="1.150"/><path d="M1086.2 686V695" stroke="#7f9fc4" stroke-width="1.150"/><path d="M1086.2 706V708" stroke="#7f9fc4" stroke-width="1.150"/><rect x="1079.7" y="695" width="13.0" height="11.0" fill="#7f9fc4"/><path d="M1101.8 722V730" stroke="#ff6a1a" stroke-width="1.150"/><rect x="1095.3" y="706" width="13.0" height="16.0" fill="#ff6a1a"/><path d="M1117.3 716V720" stroke="#ff6a1a" stroke-width="1.150"/><path d="M1117.3 724.7V737" stroke="#ff6a1a" stroke-width="1.150"/><rect x="1110.8" y="720" width="13.0" height="4.7" fill="#ff6a1a"/><path d="M1132.9 728.7V735" stroke="#ff6a1a" stroke-width="1.150"/><rect x="1126.4" y="725" width="13.0" height="3.7" fill="#ff6a1a"/><path d="M1148.4 711V714" stroke="#7f9fc4" stroke-width="1.150"/><rect x="1142.4" y="714.5" width="12.0" height="14.5" fill="none" stroke="#7f9fc4" stroke-width="1.150"/><path d="M1163.9 697.5V701" stroke="#7f9fc4" stroke-width="1.150"/><rect x="1157.9" y="701.5" width="12.0" height="12.7" fill="none" stroke="#7f9fc4" stroke-width="1.150"/><path d="M1179.5 688V701.7" stroke="#7f9fc4" stroke-width="1.150"/><path d="M1179.5 709.5V715" stroke="#7f9fc4" stroke-width="1.150"/><rect x="1173.5" y="702.2" width="12.0" height="6.8" fill="none" stroke="#7f9fc4" stroke-width="1.150"/><path d="M1195.0 690V691" stroke="#7f9fc4" stroke-width="1.150"/><path d="M1195.0 702V703.7" stroke="#7f9fc4" stroke-width="1.150"/><rect x="1189.0" y="691.5" width="12.0" height="10.0" fill="none" stroke="#7f9fc4" stroke-width="1.150"/><rect x="1204.5" y="669.5" width="12.0" height="14.5" fill="none" stroke="#7f9fc4" stroke-width="1.150"/><path d="M1226.1 662.5V666" stroke="#7f9fc4" stroke-width="1.150"/><rect x="1220.1" y="666.5" width="12.0" height="2.5" fill="none" stroke="#7f9fc4" stroke-width="1.150"/><path d="M1241.6 646.7V651" stroke="#7f9fc4" stroke-width="1.150"/><rect x="1235.6" y="651.5" width="12.0" height="9.0" fill="none" stroke="#7f9fc4" stroke-width="1.150"/><rect x="1251.1" y="649.5" width="12.0" height="2.0" fill="none" stroke="#7f9fc4" stroke-width="1.150"/><path d="M1272.7 698.7V702" stroke="#ff6a1a" stroke-width="1.150"/><rect x="1266.2" y="678" width="13.0" height="20.7" fill="#ff6a1a"/><path d="M1288.2 693V699" stroke="#ff6a1a" stroke-width="1.150"/><path d="M1288.2 719.7V723.7" stroke="#ff6a1a" stroke-width="1.150"/><rect x="1281.7" y="699" width="13.0" height="20.7" fill="#ff6a1a"/><rect x="1297.7" y="712.2" width="12.0" height="4.3" fill="none" stroke="#7f9fc4" stroke-width="1.150"/><path d="M1319.3 710V711" stroke="#ff6a1a" stroke-width="1.150"/><path d="M1319.3 714V727.5" stroke="#ff6a1a" stroke-width="1.150"/><rect x="1312.8" y="711" width="13.0" height="3.0" fill="#ff6a1a"/><path d="M1334.8 708V720" stroke="#ff6a1a" stroke-width="1.150"/><path d="M1334.8 723V731" stroke="#ff6a1a" stroke-width="1.150"/><rect x="1328.3" y="720" width="13.0" height="3.0" fill="#ff6a1a"/><path d="M1350.3 715V723.7" stroke="#ff6a1a" stroke-width="1.150"/><path d="M1350.3 732V737" stroke="#ff6a1a" stroke-width="1.150"/><rect x="1343.8" y="723.7" width="13.0" height="8.3" fill="#ff6a1a"/><path d="M1365.9 752V757.5" stroke="#ff6a1a" stroke-width="1.150"/><rect x="1359.4" y="740" width="13.0" height="12.0" fill="#ff6a1a"/><path d="M1381.4 741V744" stroke="#7f9fc4" stroke-width="1.150"/><path d="M1381.4 753V756" stroke="#7f9fc4" stroke-width="1.150"/><rect x="1375.4" y="744.5" width="12.0" height="8.0" fill="none" stroke="#7f9fc4" stroke-width="1.150"/><path d="M1396.9 737.5V743" stroke="#7f9fc4" stroke-width="1.150"/><path d="M1396.9 753V757.5" stroke="#7f9fc4" stroke-width="1.150"/><rect x="1390.9" y="743.5" width="12.0" height="9.0" fill="none" stroke="#7f9fc4" stroke-width="1.150"/><path d="M1412.5 743V747.5" stroke="#7f9fc4" stroke-width="1.150"/><rect x="1406.5" y="733.5" width="12.0" height="9.0" fill="none" stroke="#7f9fc4" stroke-width="1.150"/><path d="M1428.0 749V755" stroke="#ff6a1a" stroke-width="1.150"/><rect x="1421.5" y="742.5" width="13.0" height="6.5" fill="#ff6a1a"/><path d="M1443.6 745V748.2" stroke="#ff6a1a" stroke-width="1.150"/><path d="M1443.6 749.2V761" stroke="#ff6a1a" stroke-width="1.150"/><rect x="1437.1" y="748.2" width="13.0" height="1.300" fill="#ff6a1a"/><path d="M1459.1 737.5V743" stroke="#7f9fc4" stroke-width="1.150"/><rect x="1452.6" y="743" width="13.0" height="2.0" fill="#7f9fc4"/><path d="M1474.6 730V742" stroke="#ff6a1a" stroke-width="1.150"/><rect x="1468.1" y="742" width="13.0" height="34.0" fill="#ff6a1a"/><path d="M1490.2 776V779" stroke="#ff6a1a" stroke-width="1.150"/><path d="M1490.2 785.5V792.5" stroke="#ff6a1a" stroke-width="1.150"/><rect x="1483.7" y="779" width="13.0" height="6.5" fill="#ff6a1a"/><path d="M1505.7 776V786" stroke="#ff6a1a" stroke-width="1.150"/><path d="M1505.7 789.6V791" stroke="#ff6a1a" stroke-width="1.150"/><rect x="1499.2" y="786" width="13.0" height="3.6" fill="#ff6a1a"/><path d="M1521.2 819.7V826" stroke="#ff6a1a" stroke-width="1.150"/><rect x="1514.7" y="801" width="13.0" height="18.7" fill="#ff6a1a"/><path d="M1536.8 820.5V832.5" stroke="#7f9fc4" stroke-width="1.150"/><rect x="1530.8" y="815.0" width="12.0" height="5.0" fill="none" stroke="#7f9fc4" stroke-width="1.150"/><path d="M1552.3 806V818.7" stroke="#ff6a1a" stroke-width="1.150"/><path d="M1552.3 823V830" stroke="#ff6a1a" stroke-width="1.150"/><rect x="1545.8" y="818.7" width="13.0" height="4.3" fill="#ff6a1a"/><path d="M1567.8 818V823" stroke="#ff6a1a" stroke-width="1.150"/><path d="M1567.8 828V834" stroke="#ff6a1a" stroke-width="1.150"/><rect x="1561.3" y="823" width="13.0" height="5.0" fill="#ff6a1a"/><rect x="1576.9" y="817" width="13.0" height="17.7" fill="#ff6a1a"/><polyline points="37.5,756.0 45.4,771.7 60.9,724.2 76.5,718.3 92.0,713.0 107.5,715.3 123.1,705.0 138.6,697.8 154.1,718.0 169.7,718.0 185.2,710.3 200.8,711.7 216.3,733.0 231.8,733.0 247.4,704.2 262.9,682.5 278.4,674.2 294.0,668.3 309.5,650.0 325.0,645.8 340.6,648.5 356.1,654.5 371.6,645.8 387.2,669.2 402.7,633.8 418.2,636.7 433.8,643.3 449.3,638.3 464.8,646.7 480.4,640.8 495.9,640.5 511.4,644.2 527.0,654.5 542.5,649.2 558.1,607.5 573.6,609.2 589.1,601.7 604.7,619.2 620.2,598.3 635.7,585.8 651.3,578.8 666.8,580.8 682.3,576.7 697.9,578.0 713.4,595.5 728.9,590.5 744.5,591.7 760.0,584.2 775.5,607.5 791.1,610.3 806.6,646.3 822.1,649.2 837.7,645.3 853.2,648.3 868.8,644.2 884.3,640.8 899.8,630.5 915.4,613.8 930.9,663.3 946.4,689.2 962.0,686.7 977.5,690.5 993.0,713.3 1008.6,709.2 1024.1,708.0 1039.6,719.7 1055.2,742.0 1070.7,707.5 1086.2,709.2 1101.8,736.7 1117.3,738.0 1132.9,738.0 1148.4,717.2 1163.9,702.5 1179.5,706.7 1195.0,695.0 1210.5,668.3 1226.1,668.3 1241.6,651.7 1257.1,651.7 1272.7,717.0 1288.2,739.2 1303.7,720.8 1319.3,722.5 1334.8,735.8 1350.3,744.2 1365.9,768.3 1381.4,750.3 1396.9,748.0 1412.5,736.7 1428.0,761.7 1443.6,759.0 1459.1,747.0 1474.6,793.0 1490.2,802.0 1505.7,798.7 1521.2,839.5 1536.8,825.0 1552.3,834.2 1567.8,841.7 1583.4,845.3" fill="none" stroke="#1fb51f" stroke-width="1.15" stroke-linejoin="round" /><polyline points="37.5,746.0 45.4,760.0 60.9,713.3 76.5,705.8 92.0,697.5 107.5,702.5 123.1,691.7 138.6,685.3 154.1,704.2 169.7,706.7 185.2,700.5 200.8,701.7 216.3,724.2 231.8,724.2 247.4,695.0 262.9,670.0 278.4,660.0 294.0,654.2 309.5,634.7 325.0,632.5 340.6,636.0 356.1,641.7 371.6,632.8 387.2,655.0 402.7,620.8 418.2,622.5 433.8,630.8 449.3,628.7 464.8,637.5 480.4,631.7 495.9,630.3 511.4,633.3 527.0,646.7 542.5,640.8 558.1,600.8 573.6,603.3 589.1,593.3 604.7,609.2 620.2,590.8 635.7,575.0 651.3,567.5 666.8,571.3 682.3,567.5 697.9,567.5 713.4,584.7 728.9,580.5 744.5,582.5 760.0,575.3 775.5,599.2 791.1,601.7 806.6,636.2 822.1,638.3 837.7,635.8 853.2,638.3 868.8,634.7 884.3,632.5 899.8,622.5 915.4,604.2 930.9,652.0 946.4,671.7 962.0,668.5 977.5,673.3 993.0,696.7 1008.6,695.3 1024.1,694.2 1039.6,705.8 1055.2,731.7 1070.7,695.5 1086.2,695.5 1101.8,720.0 1117.3,720.3 1132.9,723.3 1148.4,701.7 1163.9,690.0 1179.5,692.8 1195.0,681.7 1210.5,655.5 1226.1,658.3 1241.6,642.5 1257.1,644.2 1272.7,709.0 1288.2,725.8 1303.7,707.0 1319.3,706.7 1334.8,717.5 1350.3,730.0 1365.9,751.7 1381.4,736.7 1396.9,733.3 1412.5,724.2 1428.0,749.2 1443.6,747.5 1459.1,736.3 1474.6,776.2 1490.2,785.0 1505.7,782.6 1521.2,818.3 1536.8,808.7 1552.3,816.7 1567.8,824.2 1583.4,827.5" fill="none" stroke="#e80000" stroke-width="1.15" stroke-linejoin="round" /><path d="M1303.500 134V186" stroke="#ff0000" stroke-width="1.200"/><path d="M1303.500 219V298.5" stroke="#ff0000" stroke-width="1.200"/><path d="M1303.500 331V503" stroke="#ff0000" stroke-width="1.200"/><path d="M1303.500 537V893" stroke="#ff0000" stroke-width="1.200"/><path d="M1583.500 134V186" stroke="#ffff00" stroke-width="1.200"/><path d="M1583.500 219V298.5" stroke="#ffff00" stroke-width="1.200"/><path d="M1583.500 331V503" stroke="#ffff00" stroke-width="1.200"/><path d="M1583.500 537V862" stroke="#ffff00" stroke-width="2"/><path d="M1298.700 636.500h7.600v17h7.400l-12 12.500l-12-12.500h9z" fill="#ff0000"/><rect x="1569" y="859.500" width="26.500" height="13.500" fill="#ffff00"/><path d="M1582.300 873V892" stroke="#ffff00" stroke-width="4.400"/><text x="1571" y="870.500" font-family="Liberation Sans,sans-serif" font-size="10" font-weight="bold" fill="#222" textLength="22.500" lengthAdjust="spacingAndGlyphs">EXIT</text><path d="M39.0 900.500l6.500-7 M49.4 900.500l6.500-7 M59.7 900.500l6.500-7 M70.0 900.500l6.500-7 M80.4 900.500l6.500-7 M90.7 900.500l6.500-7 M101.1 900.500l6.500-7 M111.4 900.500l6.500-7 M121.8 900.500l6.500-7 M132.1 900.500l6.500-7 M142.5 900.500l6.500-7 M152.8 900.500l6.500-7 M163.2 900.500l6.500-7 M173.5 900.500l6.500-7 M183.9 900.500l6.500-7 M194.2 900.500l6.500-7 M204.6 900.500l6.500-7 M214.9 900.500l6.500-7 M225.3 900.500l6.500-7 M235.6 900.500l6.500-7 M246.0 900.500l6.500-7 M256.3 900.500l6.500-7 M266.7 900.500l6.500-7 M277.0 900.500l6.500-7 M287.4 900.500l6.500-7 M297.8 900.500l6.500-7 M308.1 900.500l6.500-7 M318.5 900.500l6.500-7 M328.8 900.500l6.500-7 M339.2 900.500l6.500-7 M349.5 900.500l6.500-7 M359.9 900.500l6.500-7 M370.2 900.500l6.500-7 M380.6 900.500l6.500-7 M390.9 900.500l6.500-7 M401.3 900.500l6.500-7" stroke="#00a000" stroke-width="1.050" fill="none"/><path d="M553.0 900.500l6.500-7 M563.4 900.500l6.500-7 M573.7 900.500l6.500-7 M584.1 900.500l6.500-7 M594.4 900.500l6.500-7 M604.8 900.500l6.500-7 M615.1 900.500l6.500-7 M625.5 900.500l6.500-7 M635.8 900.500l6.500-7 M646.2 900.500l6.500-7 M656.5 900.500l6.500-7 M666.9 900.500l6.500-7 M677.2 900.500l6.500-7 M687.6 900.500l6.500-7 M697.9 900.500l6.500-7 M708.3 900.500l6.500-7 M718.6 900.500l6.500-7 M729.0 900.500l6.500-7 M739.3 900.500l6.500-7 M749.7 900.500l6.500-7 M760.0 900.500l6.500-7 M770.4 900.500l6.500-7 M780.7 900.500l6.500-7 M791.1 900.500l6.500-7" stroke="#00a000" stroke-width="1.050" fill="none"/><path d="M797.0 893.500l6.500 7 M807.4 893.500l6.500 7 M817.7 893.500l6.500 7 M828.1 893.500l6.500 7 M838.4 893.500l6.500 7 M848.8 893.500l6.500 7 M859.1 893.500l6.500 7 M869.5 893.500l6.500 7 M879.8 893.500l6.500 7 M890.2 893.500l6.500 7 M900.5 893.500l6.500 7 M910.9 893.500l6.500 7 M921.2 893.500l6.500 7 M931.6 893.500l6.500 7 M941.9 893.500l6.500 7 M952.3 893.500l6.500 7 M962.6 893.500l6.500 7 M973.0 893.500l6.500 7 M983.3 893.500l6.500 7 M993.7 893.500l6.500 7 M1004.0 893.500l6.500 7 M1014.4 893.500l6.500 7 M1024.7 893.500l6.500 7 M1035.1 893.500l6.500 7 M1045.4 893.500l6.500 7 M1055.8 893.500l6.500 7 M1066.1 893.500l6.500 7 M1076.5 893.500l6.500 7" stroke="#d80000" stroke-width="1.050" fill="none"/><path d="M1250.0 900.500l6.500-7 M1260.3 900.500l6.500-7 M1270.7 900.500l6.500-7 M1281.0 900.500l6.500-7" stroke="#00a000" stroke-width="1.050" fill="none"/><path d="M1296.0 893.500l6.500 7 M1306.3 893.500l6.500 7 M1316.7 893.500l6.500 7 M1327.0 893.500l6.500 7 M1337.4 893.500l6.500 7 M1347.7 893.500l6.500 7 M1358.1 893.500l6.500 7 M1368.4 893.500l6.500 7 M1378.8 893.500l6.500 7 M1389.1 893.500l6.500 7 M1399.5 893.500l6.500 7 M1409.8 893.500l6.500 7 M1420.2 893.500l6.500 7 M1430.5 893.500l6.500 7 M1440.9 893.500l6.500 7 M1451.2 893.500l6.500 7 M1461.6 893.500l6.500 7 M1471.9 893.500l6.500 7 M1482.3 893.500l6.500 7 M1492.6 893.500l6.500 7 M1503.0 893.500l6.500 7 M1513.3 893.500l6.500 7 M1523.7 893.500l6.500 7 M1534.0 893.500l6.500 7 M1544.4 893.500l6.500 7 M1554.7 893.500l6.500 7 M1565.1 893.500l6.500 7" stroke="#d80000" stroke-width="1.050" fill="none"/><rect x="411.7" y="899.300" width="138.3" height="2" fill="#ffff00"/><rect x="1079" y="899.300" width="168" height="2" fill="#ffff00"/><rect x="1575" y="899.300" width="22" height="2" fill="#ffff00"/><path d="M219 894.300h7" stroke="#0000d0" stroke-width="1.300"/><path d="M475 894.300h7" stroke="#0000d0" stroke-width="1.300"/><path d="M669 894.300h7" stroke="#0000d0" stroke-width="1.300"/><path d="M933 894.300h7" stroke="#0000d0" stroke-width="1.300"/><path d="M1158 894.300h7" stroke="#0000d0" stroke-width="1.300"/><path d="M1267 894.300h7" stroke="#0000d0" stroke-width="1.300"/><path d="M1430 894.300h7" stroke="#0000d0" stroke-width="1.300"/><path d="M1580 894.300h7" stroke="#0000d0" stroke-width="1.300"/><g shape-rendering="crispEdges" stroke="#fff" stroke-width="1"><path d="M1854.500 136V186M1854.500 221V298M1854.500 333V503M1854.500 539V893"/><path d="M1854 138.500h10 M1854 149.500h4 M1854 160.500h10 M1854 171.500h4 M1854 181.500h10 M1854 227.500h4 M1854 237.500h10 M1854 247.500h4 M1854 257.500h10 M1854 267.500h4 M1854 277.500h10 M1854 287.500h4 M1854 296.500h10 M1854 495.500h4 M1854 485.500h4 M1854 475.500h10 M1854 465.500h4 M1854 455.500h4 M1854 445.500h4 M1854 435.500h4 M1854 425.500h10 M1854 415.500h4 M1854 405.500h4 M1854 395.500h4 M1854 385.500h4 M1854 375.500h10 M1854 365.500h4 M1854 355.500h4 M1854 345.500h4 M1854 335.500h4 M1854 539.500h5 M1854 543.500h5 M1854 547.500h5 M1854 551.500h5 M1854 555.500h11 M1854 559.500h5 M1854 563.500h5 M1854 567.500h5 M1854 571.500h5 M1854 575.500h11 M1854 579.500h5 M1854 583.500h5 M1854 587.500h5 M1854 591.500h5 M1854 595.500h11 M1854 599.500h5 M1854 602.500h5 M1854 606.500h5 M1854 610.500h5 M1854 614.500h11 M1854 618.500h5 M1854 622.500h5 M1854 626.500h5 M1854 630.500h5 M1854 634.500h11 M1854 638.500h5 M1854 642.500h5 M1854 646.500h5 M1854 650.500h5 M1854 654.500h11 M1854 658.500h5 M1854 662.500h5 M1854 666.500h5 M1854 670.500h5 M1854 674.500h11 M1854 678.500h5 M1854 682.500h5 M1854 686.500h5 M1854 690.500h5 M1854 694.500h11 M1854 697.500h5 M1854 701.500h5 M1854 705.500h5 M1854 709.500h5 M1854 713.500h11 M1854 717.500h5 M1854 721.500h5 M1854 725.500h5 M1854 729.500h5 M1854 733.500h11 M1854 737.500h5 M1854 741.500h5 M1854 745.500h5 M1854 749.500h5 M1854 753.500h11 M1854 757.500h5 M1854 761.500h5 M1854 765.500h5 M1854 769.500h5 M1854 773.500h11 M1854 777.500h5 M1854 781.500h5 M1854 785.500h5 M1854 789.500h5 M1854 792.500h11 M1854 796.500h5 M1854 800.500h5 M1854 804.500h5 M1854 808.500h5 M1854 812.500h11 M1854 816.500h5 M1854 820.500h5 M1854 824.500h5 M1854 828.500h5 M1854 832.500h11 M1854 836.500h5 M1854 840.500h5 M1854 844.500h5 M1854 848.500h5 M1854 852.500h11 M1854 856.500h5 M1854 860.500h5 M1854 864.500h5 M1854 868.500h5 M1854 872.500h11 M1854 876.500h5 M1854 880.500h5 M1854 884.500h5 M1854 887.500h5 M1854 891.500h11"/><path d="M37 901.500H1855M37 921.500H1855"/><path d="M185.500 902V921 M340.500 902V921 M495.500 902V921 M651.500 902V921 M806.500 902V921 M961.500 902V921 M1054.500 902V921 M1117.500 902V921 M1240.500 902V921 M1396.500 902V921 M1552.500 902V921M340.500 921V942M1054.500 921V942M1854.500 901V942"/></g><text x="1912" y="167.2" text-anchor="end" font-family="Liberation Sans,sans-serif" font-size="15.3" fill="#fff" >0</text><text x="1912" y="244.7" text-anchor="end" font-family="Liberation Sans,sans-serif" font-size="15.3" fill="#fff" >1000</text><text x="1912" y="264.2" text-anchor="end" font-family="Liberation Sans,sans-serif" font-size="15.3" fill="#fff" >0</text><text x="1912" y="284.2" text-anchor="end" font-family="Liberation Sans,sans-serif" font-size="15.3" fill="#fff" >-1000</text><text x="1912" y="382.2" text-anchor="end" font-family="Liberation Sans,sans-serif" font-size="15.3" fill="#ececec" >50</text><text x="1912" y="432.2" text-anchor="end" font-family="Liberation Sans,sans-serif" font-size="15.3" fill="#ececec" >0</text><text x="1912" y="482.2" text-anchor="end" font-family="Liberation Sans,sans-serif" font-size="15.3" fill="#ececec" >-50</text><text x="1912" y="561.9" text-anchor="end" font-family="Liberation Sans,sans-serif" font-size="15.3" fill="#dcdce8" >4350</text><text x="1912" y="581.6899999999999" text-anchor="end" font-family="Liberation Sans,sans-serif" font-size="15.3" fill="#dcdce8" >4300</text><text x="1912" y="601.48" text-anchor="end" font-family="Liberation Sans,sans-serif" font-size="15.3" fill="#dcdce8" >4250</text><text x="1912" y="621.27" text-anchor="end" font-family="Liberation Sans,sans-serif" font-size="15.3" fill="#dcdce8" >4200</text><text x="1912" y="641.06" text-anchor="end" font-family="Liberation Sans,sans-serif" font-size="15.3" fill="#dcdce8" >4150</text><text x="1912" y="660.8499999999999" text-anchor="end" font-family="Liberation Sans,sans-serif" font-size="15.3" fill="#dcdce8" >4100</text><text x="1912" y="680.64" text-anchor="end" font-family="Liberation Sans,sans-serif" font-size="15.3" fill="#dcdce8" >4050</text><text x="1912" y="700.43" text-anchor="end" font-family="Liberation Sans,sans-serif" font-size="15.3" fill="#dcdce8" >4000</text><text x="1912" y="720.22" text-anchor="end" font-family="Liberation Sans,sans-serif" font-size="15.3" fill="#dcdce8" >3950</text><text x="1912" y="740.01" text-anchor="end" font-family="Liberation Sans,sans-serif" font-size="15.3" fill="#dcdce8" >3900</text><text x="1912" y="759.8" text-anchor="end" font-family="Liberation Sans,sans-serif" font-size="15.3" fill="#dcdce8" >3850</text><text x="1912" y="779.5899999999999" text-anchor="end" font-family="Liberation Sans,sans-serif" font-size="15.3" fill="#dcdce8" >3800</text><text x="1912" y="799.38" text-anchor="end" font-family="Liberation Sans,sans-serif" font-size="15.3" fill="#dcdce8" >3750</text><text x="1912" y="819.17" text-anchor="end" font-family="Liberation Sans,sans-serif" font-size="15.3" fill="#dcdce8" >3700</text><text x="1912" y="838.96" text-anchor="end" font-family="Liberation Sans,sans-serif" font-size="15.3" fill="#dcdce8" >3650</text><text x="1912" y="858.75" text-anchor="end" font-family="Liberation Sans,sans-serif" font-size="15.3" fill="#dcdce8" >3600</text><text x="1912" y="878.54" text-anchor="end" font-family="Liberation Sans,sans-serif" font-size="15.3" fill="#dcdce8" >3550</text><rect x="1859.500" y="826.500" width="62" height="18" fill="#000" stroke="#fff" stroke-width="1.200"/><text x="1861.5" y="841" text-anchor="start" font-family="Liberation Sans,sans-serif" font-size="15.5" fill="#e80000" textLength="56" lengthAdjust="spacingAndGlyphs">3641.800</text><rect x="37" y="906" width="1.500" height="12" fill="#d8d8a0"/><text x="40" y="917.3" text-anchor="start" font-family="Liberation Sans,sans-serif" font-size="15.3" fill="#fff" >8</text><text x="64.3" y="917.3" text-anchor="start" font-family="Liberation Sans,sans-serif" font-size="15.3" fill="#fff" >19</text><text x="93.6" y="917.3" text-anchor="start" font-family="Liberation Sans,sans-serif" font-size="15.3" fill="#fff" >20</text><text x="125.3" y="917.3" text-anchor="start" font-family="Liberation Sans,sans-serif" font-size="15.3" fill="#fff" >21</text><text x="156.3" y="917.3" text-anchor="start" font-family="Liberation Sans,sans-serif" font-size="15.3" fill="#fff" >22</text><text x="188.0" y="917.3" text-anchor="start" font-family="Liberation Sans,sans-serif" font-size="15.3" fill="#fff" >25</text><text x="218.60000000000002" y="917.3" text-anchor="start" font-family="Liberation Sans,sans-serif" font-size="15.3" fill="#fff" >26</text><text x="250.3" y="917.3" text-anchor="start" font-family="Liberation Sans,sans-serif" font-size="15.3" fill="#fff" >27</text><text x="280.3" y="917.3" text-anchor="start" font-family="Liberation Sans,sans-serif" font-size="15.3" fill="#fff" >28</text><text x="311.3" y="917.3" text-anchor="start" font-family="Liberation Sans,sans-serif" font-size="15.3" fill="#fff" >29</text><text x="343.6" y="917.3" text-anchor="start" font-family="Liberation Sans,sans-serif" font-size="15.3" fill="#fff" >1</text><text x="374.3" y="917.3" text-anchor="start" font-family="Liberation Sans,sans-serif" font-size="15.3" fill="#fff" >2</text><text x="405.3" y="917.3" text-anchor="start" font-family="Liberation Sans,sans-serif" font-size="15.3" fill="#fff" >3</text><text x="436.3" y="917.3" text-anchor="start" font-family="Liberation Sans,sans-serif" font-size="15.3" fill="#fff" >4</text><text x="467.0" y="917.3" text-anchor="start" font-family="Liberation Sans,sans-serif" font-size="15.3" fill="#fff" >5</text><text x="498.0" y="917.3" text-anchor="start" font-family="Liberation Sans,sans-serif" font-size="15.3" fill="#fff" >8</text><text x="529.3" y="917.3" text-anchor="start" font-family="Liberation Sans,sans-serif" font-size="15.3" fill="#fff" >9</text><text x="560.3" y="917.3" text-anchor="start" font-family="Liberation Sans,sans-serif" font-size="15.3" fill="#fff" >10</text><text x="591.3" y="917.3" text-anchor="start" font-family="Liberation Sans,sans-serif" font-size="15.3" fill="#fff" >11</text><text x="623.0" y="917.3" text-anchor="start" font-family="Liberation Sans,sans-serif" font-size="15.3" fill="#fff" >12</text><text x="653.5999999999999" y="917.3" text-anchor="start" font-family="Liberation Sans,sans-serif" font-size="15.3" fill="#fff" >15</text><text x="684.5999999999999" y="917.3" text-anchor="start" font-family="Liberation Sans,sans-serif" font-size="15.3" fill="#fff" >16</text><text x="716.0" y="917.3" text-anchor="start" font-family="Liberation Sans,sans-serif" font-size="15.3" fill="#fff" >17</text><text x="747.0" y="917.3" text-anchor="start" font-family="Liberation Sans,sans-serif" font-size="15.3" fill="#fff" >18</text><text x="778.0" y="917.3" text-anchor="start" font-family="Liberation Sans,sans-serif" font-size="15.3" fill="#fff" >19</text><text x="809.3" y="917.3" text-anchor="start" font-family="Liberation Sans,sans-serif" font-size="15.3" fill="#fff" >22</text><text x="839.5999999999999" y="917.3" text-anchor="start" font-family="Liberation Sans,sans-serif" font-size="15.3" fill="#fff" >23</text><text x="871.0" y="917.3" text-anchor="start" font-family="Liberation Sans,sans-serif" font-size="15.3" fill="#fff" >24</text><text x="902.0" y="917.3" text-anchor="start" font-family="Liberation Sans,sans-serif" font-size="15.3" fill="#fff" >25</text><text x="933.0" y="917.3" text-anchor="start" font-family="Liberation Sans,sans-serif" font-size="15.3" fill="#fff" >26</text><text x="964.3" y="917.3" text-anchor="start" font-family="Liberation Sans,sans-serif" font-size="15.3" fill="#fff" >29</text><text x="995.3" y="917.3" text-anchor="start" font-family="Liberation Sans,sans-serif" font-size="15.3" fill="#fff" >30</text><text x="1027.0" y="917.3" text-anchor="start" font-family="Liberation Sans,sans-serif" font-size="15.3" fill="#fff" >31</text><text x="1057.0" y="917.3" text-anchor="start" font-family="Liberation Sans,sans-serif" font-size="15.3" fill="#fff" >1</text><text x="1088.0" y="917.3" text-anchor="start" font-family="Liberation Sans,sans-serif" font-size="15.3" fill="#fff" >2</text><text x="1119.6" y="917.3" text-anchor="start" font-family="Liberation Sans,sans-serif" font-size="15.3" fill="#fff" >6</text><text x="1150.3" y="917.3" text-anchor="start" font-family="Liberation Sans,sans-serif" font-size="15.3" fill="#fff" >7</text><text x="1181.3" y="917.3" text-anchor="start" font-family="Liberation Sans,sans-serif" font-size="15.3" fill="#fff" >8</text><text x="1213.0" y="917.3" text-anchor="start" font-family="Liberation Sans,sans-serif" font-size="15.3" fill="#fff" >9</text><text x="1243.6" y="917.3" text-anchor="start" font-family="Liberation Sans,sans-serif" font-size="15.3" fill="#fff" >12</text><text x="1274.8" y="917.3" text-anchor="start" font-family="Liberation Sans,sans-serif" font-size="15.3" fill="#fff" >13</text><text x="1306.3" y="917.3" text-anchor="start" font-family="Liberation Sans,sans-serif" font-size="15.3" fill="#fff" >14</text><text x="1337.6" y="917.3" text-anchor="start" font-family="Liberation Sans,sans-serif" font-size="15.3" fill="#fff" >15</text><text x="1368.6" y="917.3" text-anchor="start" font-family="Liberation Sans,sans-serif" font-size="15.3" fill="#fff" >16</text><text x="1399.6" y="917.3" text-anchor="start" font-family="Liberation Sans,sans-serif" font-size="15.3" fill="#fff" >19</text><text x="1429.3" y="917.3" text-anchor="start" font-family="Liberation Sans,sans-serif" font-size="15.3" fill="#fff" >20</text><text x="1460.3" y="917.3" text-anchor="start" font-family="Liberation Sans,sans-serif" font-size="15.3" fill="#fff" >21</text><text x="1492.0" y="917.3" text-anchor="start" font-family="Liberation Sans,sans-serif" font-size="15.3" fill="#fff" >22</text><text x="1522.6" y="917.3" text-anchor="start" font-family="Liberation Sans,sans-serif" font-size="15.3" fill="#fff" >23</text><text x="1554.6" y="917.3" text-anchor="start" font-family="Liberation Sans,sans-serif" font-size="15.3" fill="#fff" >26</text><text x="1585.3" y="917.3" text-anchor="start" font-family="Liberation Sans,sans-serif" font-size="15.3" fill="#fff" >27</text><text x="1632.0" y="917.3" text-anchor="start" font-family="Liberation Sans,sans-serif" font-size="15.3" fill="#fff" >28</text><text x="1724.6" y="917.3" text-anchor="start" font-family="Liberation Sans,sans-serif" font-size="15.3" fill="#fff" >29</text><text x="1818.0" y="917.3" text-anchor="start" font-family="Liberation Sans,sans-serif" font-size="15.3" fill="#fff" >30</text><text x="343.3" y="937.3" text-anchor="start" font-family="Liberation Sans,sans-serif" font-size="15.3" fill="#fff" textLength="46.700" lengthAdjust="spacingAndGlyphs">August</text><text x="1056.7" y="937.3" text-anchor="start" font-family="Liberation Sans,sans-serif" font-size="15.3" fill="#fff" textLength="75.700" lengthAdjust="spacingAndGlyphs">September</text></svg><div class="a" style="left:1855px;top:901px;width:65px;height:42px;background:#f0f0f0;border-left:1px solid #fff;border-top:1px solid #d8d8d8;box-sizing:border-box"></div><svg class="a" style="left:1872px;top:909px" width="26" height="26" viewBox="0 0 26 26"><circle cx="12.500" cy="12.500" r="9.500" fill="none" stroke="#222" stroke-width="1.500"/><circle cx="9" cy="10" r="1.500" fill="#222"/><circle cx="16" cy="10" r="1.500" fill="#222"/><path d="M8 16h9" stroke="#222" stroke-width="1.600"/></svg></body></html>
